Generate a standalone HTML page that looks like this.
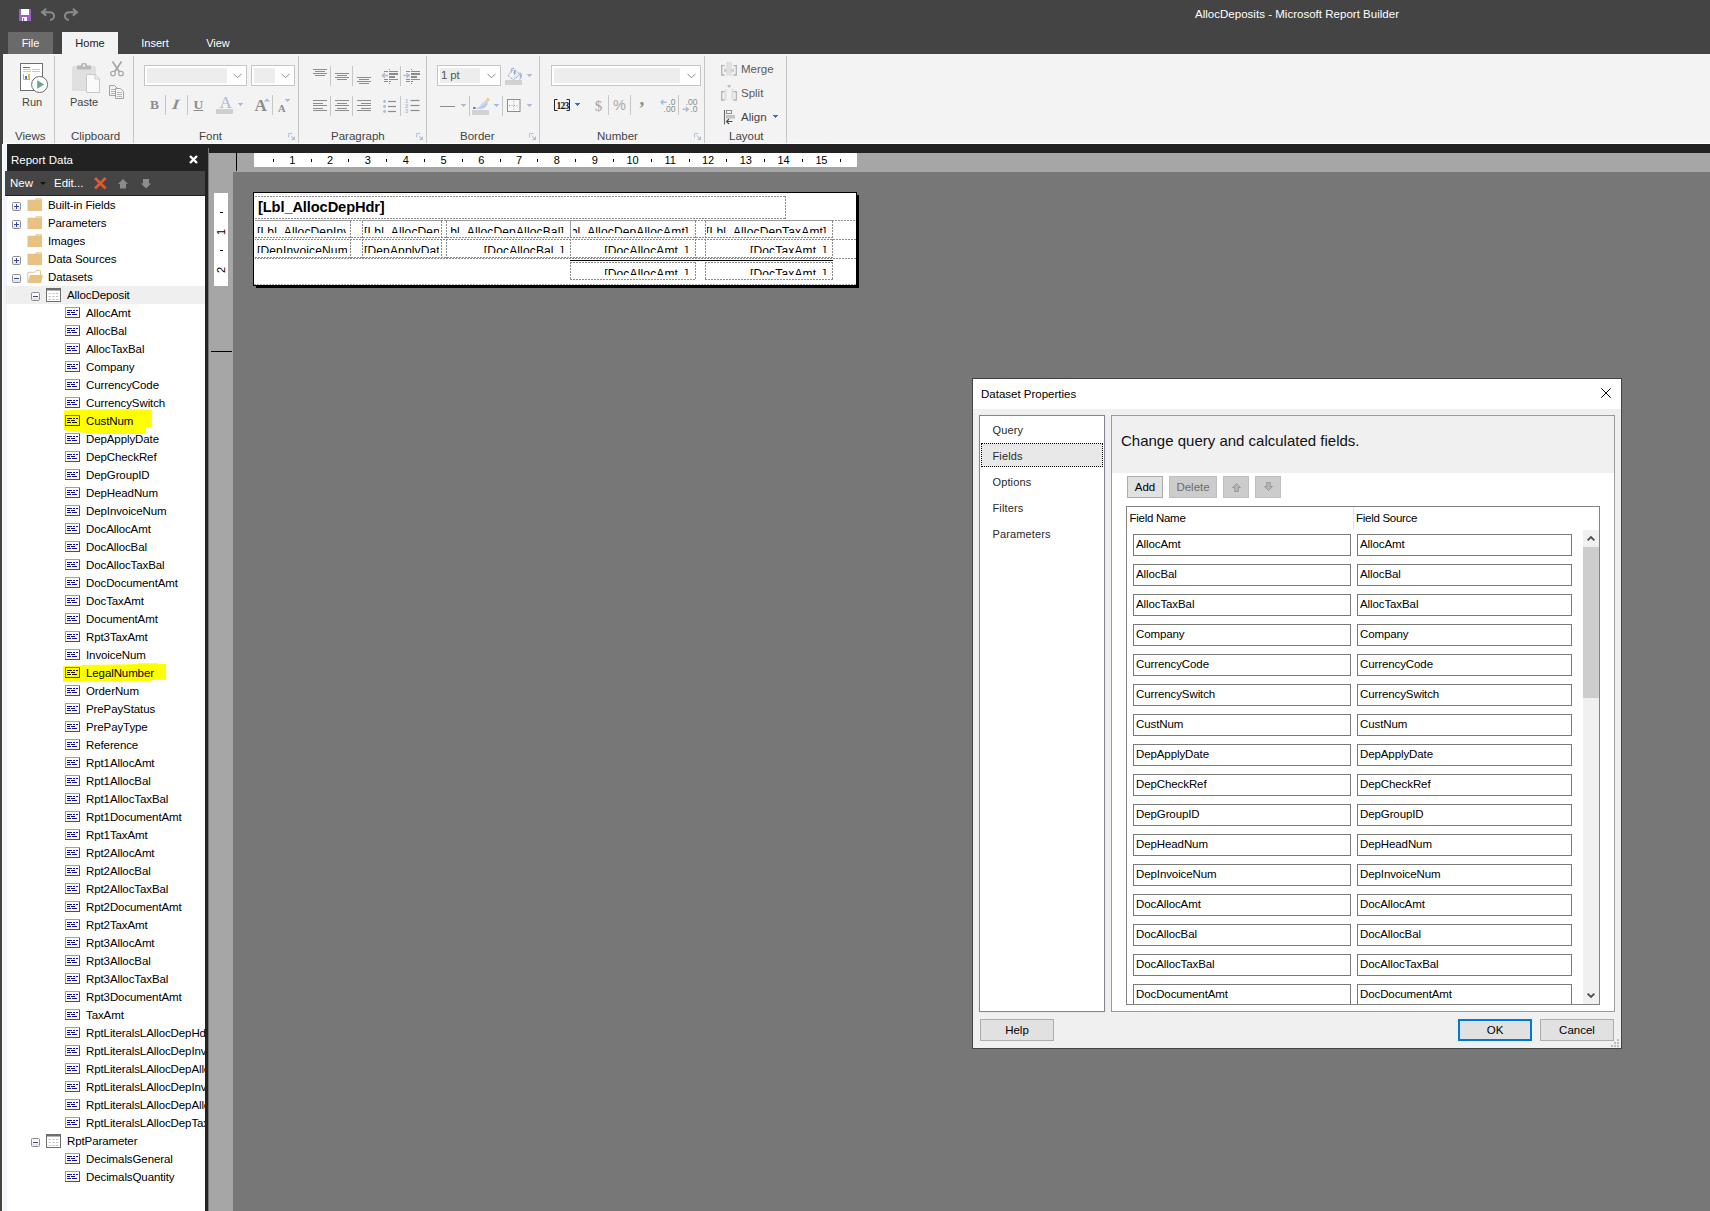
<!DOCTYPE html>
<html lang="en">
<head>
<meta charset="utf-8">
<title>AllocDeposits - Microsoft Report Builder</title>
<style>
*{box-sizing:border-box;margin:0;padding:0}
html,body{width:1710px;height:1211px;overflow:hidden;background:#444444}
body{position:relative;font-family:"Liberation Sans",sans-serif;font-size:11.5px;color:#000;letter-spacing:0}
.abs{position:absolute}
.t{position:absolute;white-space:nowrap;line-height:14px}
svg{position:absolute;overflow:visible}
/* title */
#title{left:1195px;top:7px;color:#fff;font-size:11.5px;letter-spacing:0.02px}
.tab{position:absolute;top:32px;height:22px;color:#fff;line-height:23px;text-align:center;font-size:11px}
#ribbon{left:3px;top:54px;width:1707px;height:90px;background:#f3f3f3}
.rsep{position:absolute;top:2px;width:1px;height:87px;background:#c6c6c6}
.glabel{position:absolute;top:75px;color:#444;font-size:11.5px;line-height:14px;white-space:nowrap}
.rtxt{position:absolute;color:#444;font-size:11.5px;line-height:14px;white-space:nowrap}
.combo{position:absolute;background:#fff;border:1px solid #c6c6c6}
.combo i{position:absolute;left:1px;top:1px;bottom:1px;background:#ededed}
.vs{position:absolute;width:1px;background:#c6c6c6}
/* left panel */
#lp{left:2px;top:144px;width:203px;height:1067px;background:#fff;overflow:hidden}
.row{position:absolute;left:0;height:18px;line-height:18px;white-space:nowrap;font-size:11.5px;letter-spacing:-0.1px}
.hl{position:absolute;background:#ffff00}
/* dialog */
#dlg{left:973px;top:379px;width:648px;height:669px;background:#f0f0f0;border:1px solid #444}
.inp{position:absolute;height:22px;background:#fff;border:1px solid #7a7a7a;font-size:11.5px;line-height:19px;padding-left:2px;white-space:nowrap;letter-spacing:-0.1px}
.btn{position:absolute;height:22px;background:#e1e1e1;border:1px solid #adadad;text-align:center;line-height:20px;font-size:11.5px}
.nav{position:absolute;left:12px;font-size:12px;line-height:14px;letter-spacing:-0.1px}
/* canvas */
.cell{position:absolute;overflow:hidden;font-size:13px;letter-spacing:0;white-space:nowrap;border:1px dashed #9a9a9a}
.cell span{position:absolute;top:5px;line-height:15px}
</style>
</head>
<body>
<!-- title bar -->
<svg class="abs" style="left:19px;top:9px" width="12" height="12" viewBox="0 0 12 12"><rect x="0" y="0" width="12" height="12" fill="#9c62c4"/><rect x="2" y="0" width="8" height="6" fill="#fff"/><rect x="3" y="8" width="5" height="4" fill="#fff"/><rect x="4" y="9" width="1.2" height="3" fill="#9c62c4"/></svg>
<svg style="left:41px;top:8px" width="14" height="13" viewBox="0 0 14 13"><path d="M5.2 0.8 L1 4.2 L5.2 7.6 M1.2 4.2 H8.5 C11.5 4.2 13 6 13 8 C13 10.3 11.3 12 9 12" fill="none" stroke="#8a8a8a" stroke-width="2"/></svg>
<svg style="left:64px;top:8px" width="14" height="13" viewBox="0 0 14 13"><path d="M8.8 0.8 L13 4.2 L8.8 7.6 M12.8 4.2 H5.5 C2.5 4.2 1 6 1 8 C1 10.3 2.7 12 5 12" fill="none" stroke="#8a8a8a" stroke-width="2"/></svg>
<div id="title" class="t">AllocDeposits - Microsoft Report Builder</div>
<div class="tab" style="left:8px;width:45px;background:#6a6a6a">File</div>
<div class="tab" style="left:62px;width:56px;height:23px;background:#f3f3f3;color:#222">Home</div>
<div class="tab" style="left:132px;width:46px">Insert</div>
<div class="tab" style="left:200px;width:36px">View</div>
<div id="ribbon" class="abs">
<div class="rsep" style="left:51px"></div>
<div class="rsep" style="left:130px"></div>
<div class="rsep" style="left:295px"></div>
<div class="rsep" style="left:423px"></div>
<div class="rsep" style="left:536px"></div>
<div class="rsep" style="left:701px"></div>
<div class="rsep" style="left:783px"></div>
<div class="glabel" style="left:12px">Views</div>
<div class="glabel" style="left:68px">Clipboard</div>
<div class="glabel" style="left:196px">Font</div>
<div class="glabel" style="left:328px">Paragraph</div>
<div class="glabel" style="left:457px">Border</div>
<div class="glabel" style="left:594px">Number</div>
<div class="glabel" style="left:726px">Layout</div>
<svg style="left:285px;top:79px" width="7" height="7" viewBox="0 0 7 7"><path d="M0.5 4.5 V0.5 H4.5" fill="none" stroke="#b4c4e0" stroke-width="1"/><path d="M2.5 2.5 L5.5 5.5" fill="none" stroke="#a9bcdc" stroke-width="1"/><path d="M7 3 V7 H3 Z" fill="#a9bcdc"/></svg>
<svg style="left:413px;top:79px" width="7" height="7" viewBox="0 0 7 7"><path d="M0.5 4.5 V0.5 H4.5" fill="none" stroke="#b4c4e0" stroke-width="1"/><path d="M2.5 2.5 L5.5 5.5" fill="none" stroke="#a9bcdc" stroke-width="1"/><path d="M7 3 V7 H3 Z" fill="#a9bcdc"/></svg>
<svg style="left:526px;top:79px" width="7" height="7" viewBox="0 0 7 7"><path d="M0.5 4.5 V0.5 H4.5" fill="none" stroke="#b4c4e0" stroke-width="1"/><path d="M2.5 2.5 L5.5 5.5" fill="none" stroke="#a9bcdc" stroke-width="1"/><path d="M7 3 V7 H3 Z" fill="#a9bcdc"/></svg>
<svg style="left:691px;top:79px" width="7" height="7" viewBox="0 0 7 7"><path d="M0.5 4.5 V0.5 H4.5" fill="none" stroke="#b4c4e0" stroke-width="1"/><path d="M2.5 2.5 L5.5 5.5" fill="none" stroke="#a9bcdc" stroke-width="1"/><path d="M7 3 V7 H3 Z" fill="#a9bcdc"/></svg>
<svg style="left:17px;top:9px" width="29" height="30" viewBox="0 0 29 30">
<rect x="0.5" y="0.5" width="22" height="27" fill="#fff" stroke="#6e6e6e"/>
<rect x="3" y="4" width="7" height="1" fill="#3b78c4"/>
<rect x="3" y="6" width="8" height="1" fill="#c8c8c8"/><rect x="3" y="8" width="8" height="1" fill="#c8c8c8"/>
<rect x="12" y="6" width="8" height="1" fill="#c8c8c8"/><rect x="12" y="8" width="8" height="1" fill="#c8c8c8"/>
<path d="M3.5 11 V16.5 H10" fill="none" stroke="#b0b0b0"/>
<rect x="5" y="13" width="2" height="3" fill="#3b78c4"/><rect x="8" y="11" width="2" height="5" fill="#eab65c"/>
<path d="M12.6 19.5 Q13 16.3 15.8 14.6" stroke="#eab65c" stroke-width="1.4" fill="none"/><path d="M11.8 22.3 H14 L13.6 25.2 Z" fill="#555"/>
<circle cx="19.6" cy="21.5" r="8" fill="#fff" stroke="#6e6e6e" stroke-width="1"/>
<path d="M17.2 17.2 L24.2 21.5 L17.2 25.8 Z" fill="#6aa68e"/>
</svg>
<div class="rtxt" style="left:19px;top:40.6px;font-size:11px">Run</div>
<svg style="left:69px;top:9px" width="29" height="30" viewBox="0 0 29 30">
<rect x="0" y="3" width="24" height="25" rx="1" fill="#e0e0e0"/>
<rect x="5" y="2.5" width="14" height="4" fill="#b9b9b9"/><rect x="9" y="0" width="6" height="4" rx="1.5" fill="#b9b9b9"/><rect x="11" y="1.5" width="2" height="2" fill="#f3f3f3"/>
<path d="M14.5 11.5 H23 L27.5 16 V29.5 H14.5 Z" fill="#fafafa" stroke="#c9c9c9"/><path d="M23 11.5 V16 H27.5" fill="none" stroke="#c9c9c9"/>
</svg>
<div class="rtxt" style="left:67px;top:40.6px;font-size:11px">Paste</div>
<svg style="left:106px;top:7px" width="16" height="16" viewBox="0 0 16 16"><path d="M3.5 0.5 L10.5 11 M12.5 0.5 L5.5 11" stroke="#a3a3a3" stroke-width="1.6" fill="none"/><circle cx="4" cy="12.5" r="2.3" fill="none" stroke="#a3a3a3" stroke-width="1.1"/><circle cx="12" cy="12.5" r="2.3" fill="none" stroke="#a3a3a3" stroke-width="1.1"/></svg>
<svg style="left:106px;top:31px" width="16" height="15" viewBox="0 0 16 15"><path d="M0.5 0.5 H5.5 L8.5 3.5 V10.5 H0.5 Z" fill="#f3f3f3" stroke="#a3a3a3"/><path d="M2 4.5 H6 M2 6.5 H6 M2 8.5 H6" stroke="#b5b5b5"/><path d="M6.5 3.5 H11.5 L14.5 6.5 V13.5 H6.5 Z" fill="#f3f3f3" stroke="#a3a3a3"/><path d="M8 7.5 H13 M8 9.5 H13 M8 11.5 H13" stroke="#b5b5b5"/></svg>
<div class="combo" style="left:141px;top:11px;width:103px;height:21px"><i style="left:2px;top:2px;bottom:2px;width:80px"></i><svg style="right:4px;top:6.5px" width="9" height="6" viewBox="0 0 9 6"><path d="M0.5 0.8 L4.5 4.8 L8.5 0.8" fill="none" stroke="#8c8c8c" stroke-width="1"/></svg></div>
<div class="combo" style="left:248px;top:11px;width:44px;height:21px"><i style="left:2px;top:2px;bottom:2px;width:21px"></i><svg style="right:4px;top:6.5px" width="9" height="6" viewBox="0 0 9 6"><path d="M0.5 0.8 L4.5 4.8 L8.5 0.8" fill="none" stroke="#8c8c8c" stroke-width="1"/></svg></div>
<div class="combo" style="left:434px;top:11px;width:64px;height:21px"><i style="left:2px;top:2px;bottom:2px;width:40px"></i><span class="t" style="left:3px;top:2px;color:#555;font-size:11.5px;letter-spacing:-0.2px">1 pt</span><svg style="right:4px;top:6.5px" width="9" height="6" viewBox="0 0 9 6"><path d="M0.5 0.8 L4.5 4.8 L8.5 0.8" fill="none" stroke="#8c8c8c" stroke-width="1"/></svg></div>
<div class="combo" style="left:548px;top:11px;width:150px;height:21px"><i style="left:2px;top:2px;bottom:2px;width:126px"></i><svg style="right:4px;top:6.5px" width="9" height="6" viewBox="0 0 9 6"><path d="M0.5 0.8 L4.5 4.8 L8.5 0.8" fill="none" stroke="#8c8c8c" stroke-width="1"/></svg></div>
<div class="vs" style="left:162px;top:41px;height:20px"></div>
<div class="vs" style="left:184px;top:41px;height:20px"></div>
<div class="vs" style="left:269px;top:41px;height:20px"></div>
<div class="vs" style="left:327px;top:12px;height:20px"></div>
<div class="vs" style="left:349px;top:12px;height:20px"></div>
<div class="vs" style="left:397px;top:12px;height:20px"></div>
<div class="vs" style="left:327px;top:42px;height:20px"></div>
<div class="vs" style="left:349px;top:42px;height:20px"></div>
<div class="vs" style="left:397px;top:42px;height:20px"></div>
<div class="vs" style="left:466px;top:42px;height:20px"></div>
<div class="vs" style="left:499px;top:42px;height:20px"></div>
<div class="vs" style="left:605px;top:41px;height:20px"></div>
<div class="vs" style="left:627px;top:41px;height:20px"></div>
<div class="vs" style="left:675px;top:41px;height:20px"></div>
<div class="t" style="left:147px;top:44.3px;font-family:'Liberation Serif',serif;letter-spacing:0;font-weight:bold;font-size:13.5px;color:#8c8c8c">B</div>
<div class="t" style="left:169.5px;top:44.3px;font-family:'Liberation Serif',serif;letter-spacing:0;font-style:italic;font-weight:bold;font-size:14px;transform:skewX(-8deg) scaleX(1.25);color:#8c8c8c">I</div>
<div class="t" style="left:190.5px;top:43.5px;font-family:'Liberation Serif',serif;letter-spacing:0;font-weight:bold;font-size:13.5px;color:#8c8c8c;text-decoration:underline;text-underline-offset:1.2px">U</div>
<div class="t" style="left:216.5px;top:41px;font-family:'Liberation Serif',serif;letter-spacing:0;font-size:17px;color:#a9b7d9;line-height:16px">A</div>
<div class="abs" style="left:213px;top:55px;width:17px;height:5px;background:#cfcfcf"></div>
<svg style="left:235px;top:49px" width="5" height="3" viewBox="0 0 5 3" shape-rendering="crispEdges"><rect x="0" y="0" width="5" height="1" fill="#a9bcdc"/><rect x="1" y="1" width="3" height="1" fill="#a9bcdc"/><rect x="2" y="2" width="1" height="1" fill="#a9bcdc"/></svg>
<div class="t" style="left:251.5px;top:44.3px;font-family:'Liberation Serif',serif;letter-spacing:0;font-size:17px;color:#8c8c8c;line-height:16px;font-weight:bold">A</div>
<svg style="left:261px;top:44px" width="6" height="4" viewBox="0 0 6 4"><path d="M0 3.6 H6 L3 0.3 Z" fill="#a9bcdc"/></svg>
<div class="t" style="left:275px;top:47.6px;font-family:'Liberation Serif',serif;letter-spacing:0;font-size:10.5px;color:#8c8c8c;line-height:13px;font-weight:bold">A</div>
<svg style="left:282px;top:45px" width="5" height="3" viewBox="0 0 5 3" shape-rendering="crispEdges"><rect x="0" y="0" width="5" height="1" fill="#a9bcdc"/><rect x="1" y="1" width="3" height="1" fill="#a9bcdc"/><rect x="2" y="2" width="1" height="1" fill="#a9bcdc"/></svg>
<svg style="left:310px;top:-54px" width="14" height="1" viewBox="0 0 14 1"><rect x="0.0" y="69" width="14" height="1" fill="#8c8c8c"/><rect x="2.0" y="71" width="10" height="1" fill="#8c8c8c"/><rect x="0.0" y="73" width="14" height="1" fill="#8c8c8c"/><rect x="2.0" y="75" width="10" height="1" fill="#8c8c8c"/></svg>
<svg style="left:332px;top:-54px" width="14" height="1" viewBox="0 0 14 1"><rect x="0.0" y="73" width="14" height="1" fill="#8c8c8c"/><rect x="2.0" y="75" width="10" height="1" fill="#8c8c8c"/><rect x="0.0" y="77" width="14" height="1" fill="#8c8c8c"/><rect x="2.0" y="79" width="10" height="1" fill="#8c8c8c"/></svg>
<svg style="left:354px;top:-54px" width="14" height="1" viewBox="0 0 14 1"><rect x="0.0" y="77" width="14" height="1" fill="#8c8c8c"/><rect x="2.0" y="79" width="10" height="1" fill="#8c8c8c"/><rect x="0.0" y="81" width="14" height="1" fill="#8c8c8c"/><rect x="2.0" y="83" width="10" height="1" fill="#8c8c8c"/></svg>
<svg style="left:310px;top:-54px" width="14" height="1" viewBox="0 0 14 1"><rect x="0" y="100" width="14" height="1" fill="#8c8c8c"/><rect x="0" y="103" width="10" height="1" fill="#8c8c8c"/><rect x="0" y="105" width="14" height="1" fill="#8c8c8c"/><rect x="0" y="108" width="10" height="1" fill="#8c8c8c"/><rect x="0" y="110" width="14" height="1" fill="#8c8c8c"/></svg>
<svg style="left:332px;top:-54px" width="14" height="1" viewBox="0 0 14 1"><rect x="0.0" y="100" width="14" height="1" fill="#8c8c8c"/><rect x="2.0" y="103" width="10" height="1" fill="#8c8c8c"/><rect x="0.0" y="105" width="14" height="1" fill="#8c8c8c"/><rect x="2.0" y="108" width="10" height="1" fill="#8c8c8c"/><rect x="0.0" y="110" width="14" height="1" fill="#8c8c8c"/></svg>
<svg style="left:354px;top:-54px" width="14" height="1" viewBox="0 0 14 1"><rect x="0" y="100" width="14" height="1" fill="#8c8c8c"/><rect x="4" y="103" width="10" height="1" fill="#8c8c8c"/><rect x="0" y="105" width="14" height="1" fill="#8c8c8c"/><rect x="4" y="108" width="10" height="1" fill="#8c8c8c"/><rect x="0" y="110" width="14" height="1" fill="#8c8c8c"/></svg>
<svg style="left:378px;top:15px" width="18" height="15" viewBox="0 0 18 15" shape-rendering="crispEdges"><rect x="8" y="0" width="1" height="1" fill="#8c8c8c"/><rect x="8" y="14" width="1" height="1" fill="#8c8c8c"/><rect x="3" y="2" width="4" height="1" fill="#8c8c8c"/><rect x="8" y="2" width="9" height="1" fill="#8c8c8c"/><rect x="8" y="4" width="9" height="2" fill="#8c8c8c"/><rect x="8" y="7" width="6" height="2" fill="#8c8c8c"/><rect x="3" y="10" width="4" height="1" fill="#8c8c8c"/><rect x="8" y="10" width="9" height="1" fill="#8c8c8c"/><rect x="3" y="12" width="4" height="1" fill="#8c8c8c"/><rect x="8" y="12" width="2" height="1" fill="#8c8c8c"/></svg>
<svg style="left:378px;top:18px" width="7" height="7" viewBox="0 0 7 7"><path d="M1.3 3.5 H6.8 M3.9 1.2 L1.3 3.5 L3.9 5.8" stroke="#a9bcdc" stroke-width="1.5" fill="none"/></svg>
<svg style="left:400px;top:15px" width="18" height="15" viewBox="0 0 18 15" shape-rendering="crispEdges"><rect x="8" y="0" width="1" height="1" fill="#8c8c8c"/><rect x="8" y="14" width="1" height="1" fill="#8c8c8c"/><rect x="3" y="2" width="4" height="1" fill="#8c8c8c"/><rect x="8" y="2" width="9" height="1" fill="#8c8c8c"/><rect x="8" y="4" width="9" height="2" fill="#8c8c8c"/><rect x="8" y="7" width="6" height="2" fill="#8c8c8c"/><rect x="3" y="10" width="4" height="1" fill="#8c8c8c"/><rect x="8" y="10" width="9" height="1" fill="#8c8c8c"/><rect x="3" y="12" width="4" height="1" fill="#8c8c8c"/><rect x="8" y="12" width="2" height="1" fill="#8c8c8c"/></svg>
<svg style="left:400px;top:18px" width="7" height="7" viewBox="0 0 7 7"><path d="M0.5 3.5 H6 M3.6 1.2 L6.2 3.5 L3.6 5.8" stroke="#a9bcdc" stroke-width="1.5" fill="none"/></svg>
<svg style="left:380px;top:45px" width="14" height="14" viewBox="0 0 14 14"><circle cx="1.6" cy="2.5" r="1.4" fill="#a9bcdc"/><rect x="5" y="1.9" width="8" height="1.2" fill="#8c8c8c"/><circle cx="1.6" cy="7.5" r="1.4" fill="#a9bcdc"/><rect x="5" y="6.9" width="8" height="1.2" fill="#8c8c8c"/><circle cx="1.6" cy="12.5" r="1.4" fill="#a9bcdc"/><rect x="5" y="11.9" width="8" height="1.2" fill="#8c8c8c"/></svg>
<svg style="left:402px;top:44px" width="15" height="15" viewBox="0 0 15 15"><text x="0" y="4.7" font-family="Liberation Sans" font-size="6" font-weight="bold" fill="#a9bcdc">1</text><rect x="5.5" y="1.9" width="9" height="1.2" fill="#8c8c8c"/><text x="0" y="9.7" font-family="Liberation Sans" font-size="6" font-weight="bold" fill="#a9bcdc">2</text><rect x="5.5" y="6.9" width="9" height="1.2" fill="#8c8c8c"/><text x="0" y="14.7" font-family="Liberation Sans" font-size="6" font-weight="bold" fill="#a9bcdc">3</text><rect x="5.5" y="11.9" width="9" height="1.2" fill="#8c8c8c"/></svg>
<svg style="left:502px;top:13px" width="18" height="19" viewBox="0 0 18 19">
<defs><linearGradient id="bk" x1="0" y1="0" x2="1" y2="1"><stop offset="0.3" stop-color="#fbfcfe"/><stop offset="1" stop-color="#cfd9f0"/></linearGradient></defs>
<rect x="0" y="13" width="17" height="5" fill="#d2d2d2"/>
<path d="M3 8.5 L9 1.8 L14.9 7.6 L8.3 12.9 Z" fill="url(#bk)" stroke="#8797ba" stroke-width="1" stroke-dasharray="1.2 0.9"/>
<path d="M6.4 5.6 C5.4 3 6.8 0.7 8.9 1.3" fill="none" stroke="#9fadcf" stroke-width="1.1"/>
<ellipse cx="9.6" cy="5.4" rx="1" ry="2.4" fill="#9aa3b8"/>
<path d="M14.2 5.3 C16.6 5.4 17.6 8 16.8 10.2 C16.3 11.6 15.2 12 14.7 13.2 C14 11 15.4 9.6 14.9 7.7 Z" fill="#a9b8e6"/>
</svg>
<svg style="left:524px;top:20px" width="5" height="3" viewBox="0 0 5 3" shape-rendering="crispEdges"><rect x="0" y="0" width="5" height="1" fill="#a9bcdc"/><rect x="1" y="1" width="3" height="1" fill="#a9bcdc"/><rect x="2" y="2" width="1" height="1" fill="#a9bcdc"/></svg>
<div class="abs" style="left:437px;top:52px;width:15px;height:1px;background:#8c8c8c"></div>
<svg style="left:458px;top:50px" width="5" height="3" viewBox="0 0 5 3" shape-rendering="crispEdges"><rect x="0" y="0" width="5" height="1" fill="#a9bcdc"/><rect x="1" y="1" width="3" height="1" fill="#a9bcdc"/><rect x="2" y="2" width="1" height="1" fill="#a9bcdc"/></svg>
<svg style="left:469px;top:43px" width="18" height="19" viewBox="0 0 18 19">
<defs><linearGradient id="br" x1="0" y1="0" x2="1" y2="1"><stop offset="0.2" stop-color="#e4ebfa"/><stop offset="1" stop-color="#95abe2"/></linearGradient></defs>
<rect x="0" y="13" width="17" height="5" fill="#d2d2d2"/>
<path d="M15.9 2.4 L13.6 5.2" stroke="#e9d189" stroke-width="3.3" stroke-linecap="round"/>
<path d="M14.9 2 L13 4.2" stroke="#f6ecc6" stroke-width="1" stroke-linecap="round"/>
<path d="M12.4 4.6 C10.6 4.4 9.6 6.4 8.6 8 C7.5 9.8 6 10.8 4.3 11.2 L4.3 11.9 C8 12.3 11.4 11.7 13.7 9.7 C15.3 8.3 16.2 6.6 15.3 5.5 Z" fill="url(#br)"/>
<rect x="1" y="10" width="2.6" height="2" fill="#5f7fd6"/>
</svg>
<svg style="left:491px;top:50px" width="5" height="3" viewBox="0 0 5 3" shape-rendering="crispEdges"><rect x="0" y="0" width="5" height="1" fill="#a9bcdc"/><rect x="1" y="1" width="3" height="1" fill="#a9bcdc"/><rect x="2" y="2" width="1" height="1" fill="#a9bcdc"/></svg>
<svg style="left:504px;top:45px" width="14" height="13" viewBox="0 0 14 13"><rect x="0.5" y="0.5" width="12.5" height="12" fill="#f8f8f8" stroke="#8c8c8c"/><path d="M6.7 2 V11.5 M2 6.5 H12" stroke="#a0a0a0" stroke-dasharray="1 1.5" fill="none"/></svg>
<svg style="left:524px;top:50px" width="5" height="3" viewBox="0 0 5 3" shape-rendering="crispEdges"><rect x="0" y="0" width="5" height="1" fill="#a9bcdc"/><rect x="1" y="1" width="3" height="1" fill="#a9bcdc"/><rect x="2" y="2" width="1" height="1" fill="#a9bcdc"/></svg>
<svg style="left:551px;top:45px" width="16" height="12" viewBox="0 0 16 12"><path d="M3.5 0.5 H0.5 V11.5 H3.5 M12.5 0.5 H15.5 V11.5 H12.5" fill="none" stroke="#222" stroke-width="1"/><text x="8.4" y="9.6" text-anchor="middle" font-family="Liberation Serif" font-weight="bold" font-size="9.5" fill="#111" letter-spacing="-0.75">123</text></svg>
<svg style="left:572px;top:49px" width="5" height="3" viewBox="0 0 5 3" shape-rendering="crispEdges"><rect x="0" y="0" width="5" height="1" fill="#3f6fc1"/><rect x="1" y="1" width="3" height="1" fill="#3f6fc1"/><rect x="2" y="2" width="1" height="1" fill="#3f6fc1"/></svg>
<div class="t" style="left:591.8px;top:43.5px;font-family:'Liberation Serif',serif;letter-spacing:0;font-size:15px;color:#a4a4a4;line-height:16px">$</div>
<div class="t" style="left:610px;top:43px;font-size:14.5px;color:#a8a8a8;line-height:16px;letter-spacing:0">%</div>
<div class="t" style="left:636.5px;top:37px;font-family:'Liberation Serif',serif;letter-spacing:0;font-size:19px;font-weight:bold;color:#8c8c8c;line-height:16px">,</div>
<svg style="left:656px;top:44px" width="17" height="15" viewBox="0 0 17 15"><path d="M2 4.3 H7.6 M4.4 2 L2 4.3 L4.4 6.6" stroke="#a9bcdc" stroke-width="1.4" fill="none"/><text x="16.4" y="6.6" text-anchor="end" font-family="Liberation Sans" font-size="8.5" fill="#8c8c8c">.0</text><text x="16.4" y="13.6" text-anchor="end" font-family="Liberation Sans" font-size="8.5" fill="#8c8c8c">.00</text></svg>
<svg style="left:678px;top:44px" width="17" height="15" viewBox="0 0 17 15"><text x="16.4" y="6.6" text-anchor="end" font-family="Liberation Sans" font-size="8.5" fill="#8c8c8c">.00</text><path d="M1.5 11.3 H7.3 M4.9 9 L7.4 11.3 L4.9 13.6" stroke="#a9bcdc" stroke-width="1.4" fill="none"/><text x="16.4" y="13.6" text-anchor="end" font-family="Liberation Sans" font-size="8.5" fill="#8c8c8c">.0</text></svg>
<svg style="left:718px;top:8px" width="16" height="15" viewBox="0 0 16 15"><rect x="5" y="0" width="6" height="13.6" fill="#e0e0e0"/><path d="M3.6 3.7 H0.7 V13 H3.6 M12.4 3.7 H15.3 V13 H12.4" fill="none" stroke="#b2b2b2" stroke-width="1.3"/><path d="M3.2 6.2 L6.2 8.4 L3.2 10.6 Z M12.8 6.2 L9.8 8.4 L12.8 10.6 Z" fill="#c2c2c2"/></svg>
<div class="rtxt" style="left:738px;top:8px;color:#5a5a5a">Merge</div>
<svg style="left:718px;top:31px" width="16" height="16" viewBox="0 0 16 16"><path d="M6 0.3 H10.2 L8.1 2.8 Z" fill="#b2b2b2"/><rect x="3.4" y="4" width="2.4" height="11" fill="#e2e2e2"/><rect x="10.4" y="4" width="2.4" height="11" fill="#e2e2e2"/><path d="M3.6 6.7 H0.7 V15 H3.6 M12.4 6.7 H15.3 V15 H12.4" fill="none" stroke="#b2b2b2" stroke-width="1.3"/></svg>
<div class="rtxt" style="left:738px;top:32px;color:#5a5a5a">Split</div>
<svg style="left:720px;top:56px" width="13" height="15" viewBox="0 0 13 15"><path d="M1.5 0 V14.5" stroke="#6a6a6a" stroke-width="1.1"/><rect x="3.5" y="0.5" width="5" height="3" fill="#f8f8f8" stroke="#8c8c8c"/><rect x="3" y="5" width="9" height="3.6" fill="#c4c4c4"/><path d="M3.5 11.5 H9.5 M6 9 L3.5 11.5 L6 14" fill="none" stroke="#4a4a4a" stroke-width="1.1"/></svg>
<div class="rtxt" style="left:738px;top:56px">Align</div>
<svg style="left:770px;top:61px" width="5" height="3" viewBox="0 0 5 3" shape-rendering="crispEdges"><rect x="0" y="0" width="5" height="1" fill="#3f6fc1"/><rect x="1" y="1" width="3" height="1" fill="#3f6fc1"/><rect x="2" y="2" width="1" height="1" fill="#3f6fc1"/></svg>
<div class="abs" style="left:0;top:89px;width:1707px;height:1px;background:#fff"></div>
</div>
<div class="abs" style="left:205px;top:144px;width:1505px;height:9px;background:#222"></div>
<div class="abs" style="left:205px;top:144px;width:4px;height:1067px;background:#222"></div>
<div class="abs" style="left:208px;top:148px;width:1px;height:1063px;background:#777"></div>
<div class="abs" style="left:209px;top:153px;width:1501px;height:1058px;background:#a6a6a6"></div>
<div class="abs" style="left:233px;top:172px;width:1477px;height:1039px;background:#777777"></div>
<div class="abs" style="left:236px;top:153px;width:1px;height:18px;background:#000"></div>
<div class="abs" style="left:211px;top:351px;width:21px;height:1px;background:#000"></div>
<div class="abs" style="left:254px;top:153px;width:603px;height:14px;background:#fff"></div>
<div class="t" style="left:282.2px;top:153px;width:20px;text-align:center;font-size:11px;letter-spacing:-0.2px;line-height:14px">1</div>
<div class="t" style="left:320.0px;top:153px;width:20px;text-align:center;font-size:11px;letter-spacing:-0.2px;line-height:14px">2</div>
<div class="t" style="left:357.8px;top:153px;width:20px;text-align:center;font-size:11px;letter-spacing:-0.2px;line-height:14px">3</div>
<div class="t" style="left:395.6px;top:153px;width:20px;text-align:center;font-size:11px;letter-spacing:-0.2px;line-height:14px">4</div>
<div class="t" style="left:433.4px;top:153px;width:20px;text-align:center;font-size:11px;letter-spacing:-0.2px;line-height:14px">5</div>
<div class="t" style="left:471.2px;top:153px;width:20px;text-align:center;font-size:11px;letter-spacing:-0.2px;line-height:14px">6</div>
<div class="t" style="left:509.0px;top:153px;width:20px;text-align:center;font-size:11px;letter-spacing:-0.2px;line-height:14px">7</div>
<div class="t" style="left:546.8px;top:153px;width:20px;text-align:center;font-size:11px;letter-spacing:-0.2px;line-height:14px">8</div>
<div class="t" style="left:584.6px;top:153px;width:20px;text-align:center;font-size:11px;letter-spacing:-0.2px;line-height:14px">9</div>
<div class="t" style="left:622.4px;top:153px;width:20px;text-align:center;font-size:11px;letter-spacing:-0.2px;line-height:14px">10</div>
<div class="t" style="left:660.1px;top:153px;width:20px;text-align:center;font-size:11px;letter-spacing:-0.2px;line-height:14px">11</div>
<div class="t" style="left:697.9px;top:153px;width:20px;text-align:center;font-size:11px;letter-spacing:-0.2px;line-height:14px">12</div>
<div class="t" style="left:735.7px;top:153px;width:20px;text-align:center;font-size:11px;letter-spacing:-0.2px;line-height:14px">13</div>
<div class="t" style="left:773.5px;top:153px;width:20px;text-align:center;font-size:11px;letter-spacing:-0.2px;line-height:14px">14</div>
<div class="t" style="left:811.3px;top:153px;width:20px;text-align:center;font-size:11px;letter-spacing:-0.2px;line-height:14px">15</div>
<div class="abs" style="left:273px;top:159px;width:1px;height:3px;background:#000"></div>
<div class="abs" style="left:311px;top:159px;width:1px;height:3px;background:#000"></div>
<div class="abs" style="left:348px;top:159px;width:1px;height:3px;background:#000"></div>
<div class="abs" style="left:386px;top:159px;width:1px;height:3px;background:#000"></div>
<div class="abs" style="left:424px;top:159px;width:1px;height:3px;background:#000"></div>
<div class="abs" style="left:462px;top:159px;width:1px;height:3px;background:#000"></div>
<div class="abs" style="left:500px;top:159px;width:1px;height:3px;background:#000"></div>
<div class="abs" style="left:537px;top:159px;width:1px;height:3px;background:#000"></div>
<div class="abs" style="left:575px;top:159px;width:1px;height:3px;background:#000"></div>
<div class="abs" style="left:613px;top:159px;width:1px;height:3px;background:#000"></div>
<div class="abs" style="left:651px;top:159px;width:1px;height:3px;background:#000"></div>
<div class="abs" style="left:689px;top:159px;width:1px;height:3px;background:#000"></div>
<div class="abs" style="left:726px;top:159px;width:1px;height:3px;background:#000"></div>
<div class="abs" style="left:764px;top:159px;width:1px;height:3px;background:#000"></div>
<div class="abs" style="left:802px;top:159px;width:1px;height:3px;background:#000"></div>
<div class="abs" style="left:840px;top:159px;width:1px;height:3px;background:#000"></div>
<div class="abs" style="left:214px;top:193px;width:14px;height:93px;background:#fff"></div>
<div class="abs" style="left:220px;top:212px;width:3px;height:1px;background:#000"></div>
<div class="t" style="left:211px;top:224.8px;width:20px;height:14px;text-align:center;font-size:11px;line-height:14px;transform:rotate(-90deg)">1</div>
<div class="abs" style="left:220px;top:250px;width:3px;height:1px;background:#000"></div>
<div class="t" style="left:211px;top:262.8px;width:20px;height:14px;text-align:center;font-size:11px;line-height:14px;transform:rotate(-90deg)">2</div>
<div class="abs" style="left:256px;top:195px;width:603px;height:93px;background:#000"></div>
<div class="abs" style="left:253px;top:192px;width:604px;height:94px;background:#fff;border:1px solid #000"></div>
<svg style="left:0;top:0" width="1710" height="300" viewBox="0 0 1710 300" shape-rendering="crispEdges" fill="none" stroke-width="1"><path d="M255 196.5 H786" stroke="#8c8c8c" stroke-dasharray="2 1" stroke-dashoffset="0"/><path d="M255 218.5 H786" stroke="#8c8c8c" stroke-dasharray="2 1" stroke-dashoffset="0"/><path d="M785.5 196 V219" stroke="#8c8c8c" stroke-dasharray="2 1" stroke-dashoffset="0"/><path d="M255 220.5 H351" stroke="#9c9c9c"/><path d="M362 220.5 H442" stroke="#9c9c9c"/><path d="M446 220.5 H571" stroke="#9c9c9c"/><path d="M570 220.5 H696" stroke="#9c9c9c"/><path d="M705 220.5 H833" stroke="#9c9c9c"/><path d="M350 220.5 H362" stroke="#8c8c8c" stroke-dasharray="2 1" stroke-dashoffset="0"/><path d="M441 220.5 H446" stroke="#8c8c8c" stroke-dasharray="2 1" stroke-dashoffset="0"/><path d="M695 220.5 H705" stroke="#8c8c8c" stroke-dasharray="2 1" stroke-dashoffset="0"/><path d="M832 220.5 H856" stroke="#8c8c8c" stroke-dasharray="2 1" stroke-dashoffset="0"/><path d="M255 237.5 H832" stroke="#8c8c8c" stroke-dasharray="2 1" stroke-dashoffset="0"/><path d="M255 239.5 H856" stroke="#8c8c8c" stroke-dasharray="2 1" stroke-dashoffset="1"/><path d="M255 257.5 H832" stroke="#8c8c8c" stroke-dasharray="2 1" stroke-dashoffset="0"/><path d="M255 258.5 H856" stroke="#8c8c8c" stroke-dasharray="2 1" stroke-dashoffset="1"/><path d="M350.5 221 V258" stroke="#8c8c8c" stroke-dasharray="2 1" stroke-dashoffset="0"/><path d="M362.5 221 V258" stroke="#8c8c8c" stroke-dasharray="2 1" stroke-dashoffset="0"/><path d="M441.5 221 V258" stroke="#8c8c8c" stroke-dasharray="2 1" stroke-dashoffset="0"/><path d="M446.5 221 V258" stroke="#8c8c8c" stroke-dasharray="2 1" stroke-dashoffset="0"/><path d="M695.5 221 V258" stroke="#8c8c8c" stroke-dasharray="2 1" stroke-dashoffset="0"/><path d="M705.5 221 V258" stroke="#8c8c8c" stroke-dasharray="2 1" stroke-dashoffset="0"/><path d="M832.5 221 V258" stroke="#8c8c8c" stroke-dasharray="2 1" stroke-dashoffset="0"/><path d="M570.5 221 V237" stroke="#9c9c9c"/><path d="M570.5 239 V258" stroke="#8c8c8c" stroke-dasharray="2 1" stroke-dashoffset="0"/><path d="M570 262.5 H696" stroke="#8c8c8c" stroke-dasharray="2 1" stroke-dashoffset="0"/><path d="M570 279.5 H696" stroke="#8c8c8c" stroke-dasharray="2 1" stroke-dashoffset="0"/><path d="M570.5 262 V280" stroke="#8c8c8c" stroke-dasharray="2 1" stroke-dashoffset="0"/><path d="M695.5 262 V280" stroke="#8c8c8c" stroke-dasharray="2 1" stroke-dashoffset="0"/><path d="M705 262.5 H833" stroke="#8c8c8c" stroke-dasharray="2 1" stroke-dashoffset="0"/><path d="M705 279.5 H833" stroke="#8c8c8c" stroke-dasharray="2 1" stroke-dashoffset="0"/><path d="M705.5 262 V280" stroke="#8c8c8c" stroke-dasharray="2 1" stroke-dashoffset="0"/><path d="M832.5 262 V280" stroke="#8c8c8c" stroke-dasharray="2 1" stroke-dashoffset="0"/><path d="M254 284.5 H856" stroke="#b0b0b0" stroke-dasharray="2 1" stroke-dashoffset="0"/><path d="M570 260.5 H833" stroke="#000"/></svg>
<div class="abs" style="left:258px;top:198px;width:526px;height:20px;overflow:hidden"><span class="t" style="left:0;top:1.23px;font-size:14.67px;line-height:normal;letter-spacing:-0.12px;font-weight:bold;">[Lbl_AllocDepHdr]</span></div>
<div class="abs" style="left:257px;top:223px;width:90px;height:10px;overflow:hidden"><span class="t" style="left:0;top:1.83px;font-size:12px;line-height:normal;letter-spacing:0.15px;">[Lbl_AllocDepInvoiceNum]</span></div>
<div class="abs" style="left:364px;top:223px;width:75px;height:10px;overflow:hidden"><span class="t" style="left:0;top:1.83px;font-size:12px;line-height:normal;letter-spacing:0.15px;">[Lbl_AllocDepInvoiceDate]</span></div>
<div class="abs" style="left:451px;top:223px;width:113px;height:10px;overflow:hidden"><span class="t" style="right:0;top:1.83px;font-size:12px;line-height:normal;letter-spacing:0.15px;">[Lbl_AllocDepAllocBal]</span></div>
<div class="abs" style="left:573px;top:223px;width:115.39999999999998px;height:10px;overflow:hidden"><span class="t" style="right:0;top:1.83px;font-size:12px;line-height:normal;letter-spacing:0.15px;">[Lbl_AllocDepAllocAmt]</span></div>
<div class="abs" style="left:707px;top:223px;width:119.5px;height:10px;overflow:hidden"><span class="t" style="right:0;top:1.83px;font-size:12px;line-height:normal;letter-spacing:0.15px;">[Lbl_AllocDepTaxAmt]</span></div>
<div class="abs" style="left:257px;top:242px;width:90px;height:11px;overflow:hidden"><span class="t" style="left:0;top:1.83px;font-size:12px;line-height:normal;letter-spacing:0.15px;">[DepInvoiceNum]</span></div>
<div class="abs" style="left:364px;top:242px;width:75px;height:11px;overflow:hidden"><span class="t" style="left:0;top:1.83px;font-size:12px;line-height:normal;letter-spacing:0.15px;">[DepApplyDate]</span></div>
<div class="abs" style="left:451px;top:242px;width:113px;height:11px;overflow:hidden"><span class="t" style="right:0;top:1.83px;font-size:12px;line-height:normal;letter-spacing:0.15px;">[DocAllocBal_]</span></div>
<div class="abs" style="left:573px;top:242px;width:115.39999999999998px;height:11px;overflow:hidden"><span class="t" style="right:0;top:1.83px;font-size:12px;line-height:normal;letter-spacing:0.15px;">[DocAllocAmt_]</span></div>
<div class="abs" style="left:707px;top:242px;width:119.5px;height:11px;overflow:hidden"><span class="t" style="right:0;top:1.83px;font-size:12px;line-height:normal;letter-spacing:0.15px;">[DocTaxAmt_]</span></div>
<div class="abs" style="left:573px;top:265px;width:115.39999999999998px;height:10px;overflow:hidden"><span class="t" style="right:0;top:1.83px;font-size:12px;line-height:normal;letter-spacing:0.15px;">[DocAllocAmt_]</span></div>
<div class="abs" style="left:707px;top:265px;width:119.5px;height:10px;overflow:hidden"><span class="t" style="right:0;top:1.83px;font-size:12px;line-height:normal;letter-spacing:0.15px;">[DocTaxAmt_]</span></div>
<div id="lp" class="abs">
<div class="abs" style="left:1px;top:0;width:4px;height:1067px;background:#f2f5fc"></div>
<div class="abs" style="left:5px;top:0;width:198px;height:27px;background:#222"></div>
<div class="t" style="left:9px;top:9px;color:#fff;letter-spacing:0">Report Data</div>
<svg style="left:187px;top:11px" width="9" height="9" viewBox="0 0 9 9"><path d="M1 1 L8 8 M8 1 L1 8" stroke="#fff" stroke-width="2.4" fill="none"/></svg>
<div class="abs" style="left:3px;top:27px;width:200px;height:25px;background:#222"></div>
<div class="abs" style="left:3px;top:27px;width:200px;height:24px;background:#454545"></div>
<div class="t" style="left:8px;top:32px;color:#fff;letter-spacing:0">New</div>
<svg style="left:38px;top:38px" width="6" height="3" viewBox="0 0 6 3"><path d="M0 0 H6 L3 3 Z" fill="#111"/></svg>
<div class="t" style="left:52px;top:32px;color:#fff;letter-spacing:0">Edit...</div>
<svg style="left:91.6px;top:32.8px" width="12.6" height="12.6" viewBox="0 0 12 12"><path d="M1 1 L11 11 M11 1 L1 11" stroke="#de5a34" stroke-width="2.7" fill="none"/></svg>
<svg style="left:116px;top:35px" width="10" height="10" viewBox="0 0 10 10"><path d="M5 0 L10 5 H8 V9.5 H2 V5 H0 Z" fill="#8d8d8d"/></svg>
<svg style="left:139px;top:35px" width="10" height="10" viewBox="0 0 10 10"><path d="M5 9.5 L10 4.5 H8 V0 H2 V4.5 H0 Z" fill="#8d8d8d"/></svg>
<svg style="left:10px;top:58px" width="9" height="9" viewBox="0 0 9 9"><rect x="0.5" y="0.5" width="8" height="8" rx="1" fill="#fafafa" stroke="#8e8e8e"/><rect x="1" y="5.5" width="7" height="2.5" fill="#e4e4e4"/><path d="M2 4.5 H7" stroke="#3447a0" stroke-width="1"/><path d="M4.5 2 V7" stroke="#3447a0" stroke-width="1"/></svg>
<svg style="left:25px;top:54px" width="15" height="13" viewBox="0 0 15 13"><path d="M0.5 2.5 Q0.5 1.8 1.2 1.8 H8 L9.5 0.3 H14.3 Q15 0.3 15 1 V13 H0.5 Z" fill="#e8c283"/><path d="M10 1.3 H14" stroke="#f7e7c6" stroke-width="0.8"/></svg>
<div class="row" style="left:46px;top:52px">Built-in Fields</div>
<svg style="left:10px;top:76px" width="9" height="9" viewBox="0 0 9 9"><rect x="0.5" y="0.5" width="8" height="8" rx="1" fill="#fafafa" stroke="#8e8e8e"/><rect x="1" y="5.5" width="7" height="2.5" fill="#e4e4e4"/><path d="M2 4.5 H7" stroke="#3447a0" stroke-width="1"/><path d="M4.5 2 V7" stroke="#3447a0" stroke-width="1"/></svg>
<svg style="left:25px;top:72px" width="15" height="13" viewBox="0 0 15 13"><path d="M0.5 2.5 Q0.5 1.8 1.2 1.8 H8 L9.5 0.3 H14.3 Q15 0.3 15 1 V13 H0.5 Z" fill="#e8c283"/><path d="M10 1.3 H14" stroke="#f7e7c6" stroke-width="0.8"/></svg>
<div class="row" style="left:46px;top:70px">Parameters</div>
<svg style="left:25px;top:90px" width="15" height="13" viewBox="0 0 15 13"><path d="M0.5 2.5 Q0.5 1.8 1.2 1.8 H8 L9.5 0.3 H14.3 Q15 0.3 15 1 V13 H0.5 Z" fill="#e8c283"/><path d="M10 1.3 H14" stroke="#f7e7c6" stroke-width="0.8"/></svg>
<div class="row" style="left:46px;top:88px">Images</div>
<svg style="left:10px;top:112px" width="9" height="9" viewBox="0 0 9 9"><rect x="0.5" y="0.5" width="8" height="8" rx="1" fill="#fafafa" stroke="#8e8e8e"/><rect x="1" y="5.5" width="7" height="2.5" fill="#e4e4e4"/><path d="M2 4.5 H7" stroke="#3447a0" stroke-width="1"/><path d="M4.5 2 V7" stroke="#3447a0" stroke-width="1"/></svg>
<svg style="left:25px;top:108px" width="15" height="13" viewBox="0 0 15 13"><path d="M0.5 2.5 Q0.5 1.8 1.2 1.8 H8 L9.5 0.3 H14.3 Q15 0.3 15 1 V13 H0.5 Z" fill="#e8c283"/><path d="M10 1.3 H14" stroke="#f7e7c6" stroke-width="0.8"/></svg>
<div class="row" style="left:46px;top:106px">Data Sources</div>
<svg style="left:10px;top:130px" width="9" height="9" viewBox="0 0 9 9"><rect x="0.5" y="0.5" width="8" height="8" rx="1" fill="#fafafa" stroke="#8e8e8e"/><rect x="1" y="5.5" width="7" height="2.5" fill="#e4e4e4"/><path d="M2 4.5 H7" stroke="#3447a0" stroke-width="1"/></svg>
<svg style="left:25px;top:126px" width="16" height="13" viewBox="0 0 16 13"><path d="M0.8 12 V3 Q0.8 2.3 1.5 2.3 H7.5 L9.3 0.5 H12.8 Q13.5 0.5 13.5 1.2 V5" fill="#fff" stroke="#e8c283" stroke-width="1"/><path d="M3 5 H16 L14 13 H0.5 Z" fill="#e8c283"/></svg>
<div class="row" style="left:46px;top:124px">Datasets</div>
<div class="abs" style="left:3.4px;top:142px;width:199.6px;height:18px;background:#efefef"></div>
<svg style="left:29px;top:148px" width="9" height="9" viewBox="0 0 9 9"><rect x="0.5" y="0.5" width="8" height="8" rx="1" fill="#fafafa" stroke="#8e8e8e"/><rect x="1" y="5.5" width="7" height="2.5" fill="#e4e4e4"/><path d="M2 4.5 H7" stroke="#3447a0" stroke-width="1"/></svg>
<svg style="left:44px;top:144px" width="15" height="14" viewBox="0 0 15 14"><rect x="0.5" y="0.5" width="14" height="13" fill="#fff" stroke="#6e6e6e"/><rect x="0" y="0" width="15" height="2.5" fill="#6e6e6e"/><path d="M2.5 5.5 H12.5 M2.5 8.5 H12.5 M2.5 11.5 H12.5" stroke="#c4c4c4" stroke-dasharray="2.4 1.3"/></svg>
<div class="row" style="left:65px;top:142px">AllocDeposit</div>
<svg style="left:63px;top:163px" width="15" height="11" viewBox="0 0 15 11" shape-rendering="crispEdges"><rect x="1" y="1" width="13" height="4" fill="#fffffb"/><rect x="1" y="5" width="13" height="5" fill="#fffde6"/><rect x="0" y="0" width="15" height="1" fill="#b89c62"/><rect x="0" y="0" width="1" height="11" fill="#b89c62"/><rect x="0" y="10" width="15" height="1" fill="#5f4a34"/><rect x="14" y="1" width="1" height="10" fill="#5f4a34"/><rect x="2" y="3" width="5" height="1" fill="#0a0a96"/><rect x="8" y="3" width="2" height="1" fill="#0a0a96"/><rect x="11" y="3" width="2" height="1" fill="#0a0a96"/><rect x="2" y="5" width="3" height="1" fill="#0a0a96"/><rect x="6" y="5" width="4" height="1" fill="#0a0a96"/><rect x="2" y="7" width="4" height="1" fill="#0a0a96"/><rect x="7" y="7" width="5" height="1" fill="#0a0a96"/></svg>
<div class="row" style="left:84px;top:160px">AllocAmt</div>
<svg style="left:63px;top:181px" width="15" height="11" viewBox="0 0 15 11" shape-rendering="crispEdges"><rect x="1" y="1" width="13" height="4" fill="#fffffb"/><rect x="1" y="5" width="13" height="5" fill="#fffde6"/><rect x="0" y="0" width="15" height="1" fill="#b89c62"/><rect x="0" y="0" width="1" height="11" fill="#b89c62"/><rect x="0" y="10" width="15" height="1" fill="#5f4a34"/><rect x="14" y="1" width="1" height="10" fill="#5f4a34"/><rect x="2" y="3" width="5" height="1" fill="#0a0a96"/><rect x="8" y="3" width="2" height="1" fill="#0a0a96"/><rect x="11" y="3" width="2" height="1" fill="#0a0a96"/><rect x="2" y="5" width="3" height="1" fill="#0a0a96"/><rect x="6" y="5" width="4" height="1" fill="#0a0a96"/><rect x="2" y="7" width="4" height="1" fill="#0a0a96"/><rect x="7" y="7" width="5" height="1" fill="#0a0a96"/></svg>
<div class="row" style="left:84px;top:178px">AllocBal</div>
<svg style="left:63px;top:199px" width="15" height="11" viewBox="0 0 15 11" shape-rendering="crispEdges"><rect x="1" y="1" width="13" height="4" fill="#fffffb"/><rect x="1" y="5" width="13" height="5" fill="#fffde6"/><rect x="0" y="0" width="15" height="1" fill="#b89c62"/><rect x="0" y="0" width="1" height="11" fill="#b89c62"/><rect x="0" y="10" width="15" height="1" fill="#5f4a34"/><rect x="14" y="1" width="1" height="10" fill="#5f4a34"/><rect x="2" y="3" width="5" height="1" fill="#0a0a96"/><rect x="8" y="3" width="2" height="1" fill="#0a0a96"/><rect x="11" y="3" width="2" height="1" fill="#0a0a96"/><rect x="2" y="5" width="3" height="1" fill="#0a0a96"/><rect x="6" y="5" width="4" height="1" fill="#0a0a96"/><rect x="2" y="7" width="4" height="1" fill="#0a0a96"/><rect x="7" y="7" width="5" height="1" fill="#0a0a96"/></svg>
<div class="row" style="left:84px;top:196px">AllocTaxBal</div>
<svg style="left:63px;top:217px" width="15" height="11" viewBox="0 0 15 11" shape-rendering="crispEdges"><rect x="1" y="1" width="13" height="4" fill="#fffffb"/><rect x="1" y="5" width="13" height="5" fill="#fffde6"/><rect x="0" y="0" width="15" height="1" fill="#b89c62"/><rect x="0" y="0" width="1" height="11" fill="#b89c62"/><rect x="0" y="10" width="15" height="1" fill="#5f4a34"/><rect x="14" y="1" width="1" height="10" fill="#5f4a34"/><rect x="2" y="3" width="5" height="1" fill="#0a0a96"/><rect x="8" y="3" width="2" height="1" fill="#0a0a96"/><rect x="11" y="3" width="2" height="1" fill="#0a0a96"/><rect x="2" y="5" width="3" height="1" fill="#0a0a96"/><rect x="6" y="5" width="4" height="1" fill="#0a0a96"/><rect x="2" y="7" width="4" height="1" fill="#0a0a96"/><rect x="7" y="7" width="5" height="1" fill="#0a0a96"/></svg>
<div class="row" style="left:84px;top:214px">Company</div>
<svg style="left:63px;top:235px" width="15" height="11" viewBox="0 0 15 11" shape-rendering="crispEdges"><rect x="1" y="1" width="13" height="4" fill="#fffffb"/><rect x="1" y="5" width="13" height="5" fill="#fffde6"/><rect x="0" y="0" width="15" height="1" fill="#b89c62"/><rect x="0" y="0" width="1" height="11" fill="#b89c62"/><rect x="0" y="10" width="15" height="1" fill="#5f4a34"/><rect x="14" y="1" width="1" height="10" fill="#5f4a34"/><rect x="2" y="3" width="5" height="1" fill="#0a0a96"/><rect x="8" y="3" width="2" height="1" fill="#0a0a96"/><rect x="11" y="3" width="2" height="1" fill="#0a0a96"/><rect x="2" y="5" width="3" height="1" fill="#0a0a96"/><rect x="6" y="5" width="4" height="1" fill="#0a0a96"/><rect x="2" y="7" width="4" height="1" fill="#0a0a96"/><rect x="7" y="7" width="5" height="1" fill="#0a0a96"/></svg>
<div class="row" style="left:84px;top:232px">CurrencyCode</div>
<svg style="left:63px;top:253px" width="15" height="11" viewBox="0 0 15 11" shape-rendering="crispEdges"><rect x="1" y="1" width="13" height="4" fill="#fffffb"/><rect x="1" y="5" width="13" height="5" fill="#fffde6"/><rect x="0" y="0" width="15" height="1" fill="#b89c62"/><rect x="0" y="0" width="1" height="11" fill="#b89c62"/><rect x="0" y="10" width="15" height="1" fill="#5f4a34"/><rect x="14" y="1" width="1" height="10" fill="#5f4a34"/><rect x="2" y="3" width="5" height="1" fill="#0a0a96"/><rect x="8" y="3" width="2" height="1" fill="#0a0a96"/><rect x="11" y="3" width="2" height="1" fill="#0a0a96"/><rect x="2" y="5" width="3" height="1" fill="#0a0a96"/><rect x="6" y="5" width="4" height="1" fill="#0a0a96"/><rect x="2" y="7" width="4" height="1" fill="#0a0a96"/><rect x="7" y="7" width="5" height="1" fill="#0a0a96"/></svg>
<div class="row" style="left:84px;top:250px">CurrencySwitch</div>
<svg style="left:0;top:0" width="203" height="1067" viewBox="0 0 203 1067"><path d="M62 266.5 L86 265.6 L138 265.3 L150 266 L150 282.7 L144 283.2 L144 290 L98 290 L68 287.6 L62 286 Z" fill="#ffff00"/></svg>
<svg style="left:63px;top:271px" width="15" height="11" viewBox="0 0 15 11" shape-rendering="crispEdges"><rect x="1" y="1" width="13" height="9" fill="#ffff00"/><rect x="0" y="0" width="15" height="1" fill="#8a7a1e"/><rect x="0" y="0" width="1" height="11" fill="#8a7a1e"/><rect x="0" y="10" width="15" height="1" fill="#4e4212"/><rect x="14" y="1" width="1" height="10" fill="#4e4212"/><rect x="2" y="3" width="5" height="1" fill="#15150a"/><rect x="8" y="3" width="2" height="1" fill="#15150a"/><rect x="11" y="3" width="2" height="1" fill="#15150a"/><rect x="2" y="5" width="3" height="1" fill="#15150a"/><rect x="6" y="5" width="4" height="1" fill="#15150a"/><rect x="2" y="7" width="4" height="1" fill="#15150a"/><rect x="7" y="7" width="5" height="1" fill="#15150a"/></svg>
<div class="row" style="left:84px;top:268px">CustNum</div>
<svg style="left:63px;top:289px" width="15" height="11" viewBox="0 0 15 11" shape-rendering="crispEdges"><rect x="1" y="1" width="13" height="4" fill="#fffffb"/><rect x="1" y="5" width="13" height="5" fill="#fffde6"/><rect x="0" y="0" width="15" height="1" fill="#b89c62"/><rect x="0" y="0" width="1" height="11" fill="#b89c62"/><rect x="0" y="10" width="15" height="1" fill="#5f4a34"/><rect x="14" y="1" width="1" height="10" fill="#5f4a34"/><rect x="2" y="3" width="5" height="1" fill="#0a0a96"/><rect x="8" y="3" width="2" height="1" fill="#0a0a96"/><rect x="11" y="3" width="2" height="1" fill="#0a0a96"/><rect x="2" y="5" width="3" height="1" fill="#0a0a96"/><rect x="6" y="5" width="4" height="1" fill="#0a0a96"/><rect x="2" y="7" width="4" height="1" fill="#0a0a96"/><rect x="7" y="7" width="5" height="1" fill="#0a0a96"/></svg>
<div class="row" style="left:84px;top:286px">DepApplyDate</div>
<svg style="left:63px;top:307px" width="15" height="11" viewBox="0 0 15 11" shape-rendering="crispEdges"><rect x="1" y="1" width="13" height="4" fill="#fffffb"/><rect x="1" y="5" width="13" height="5" fill="#fffde6"/><rect x="0" y="0" width="15" height="1" fill="#b89c62"/><rect x="0" y="0" width="1" height="11" fill="#b89c62"/><rect x="0" y="10" width="15" height="1" fill="#5f4a34"/><rect x="14" y="1" width="1" height="10" fill="#5f4a34"/><rect x="2" y="3" width="5" height="1" fill="#0a0a96"/><rect x="8" y="3" width="2" height="1" fill="#0a0a96"/><rect x="11" y="3" width="2" height="1" fill="#0a0a96"/><rect x="2" y="5" width="3" height="1" fill="#0a0a96"/><rect x="6" y="5" width="4" height="1" fill="#0a0a96"/><rect x="2" y="7" width="4" height="1" fill="#0a0a96"/><rect x="7" y="7" width="5" height="1" fill="#0a0a96"/></svg>
<div class="row" style="left:84px;top:304px">DepCheckRef</div>
<svg style="left:63px;top:325px" width="15" height="11" viewBox="0 0 15 11" shape-rendering="crispEdges"><rect x="1" y="1" width="13" height="4" fill="#fffffb"/><rect x="1" y="5" width="13" height="5" fill="#fffde6"/><rect x="0" y="0" width="15" height="1" fill="#b89c62"/><rect x="0" y="0" width="1" height="11" fill="#b89c62"/><rect x="0" y="10" width="15" height="1" fill="#5f4a34"/><rect x="14" y="1" width="1" height="10" fill="#5f4a34"/><rect x="2" y="3" width="5" height="1" fill="#0a0a96"/><rect x="8" y="3" width="2" height="1" fill="#0a0a96"/><rect x="11" y="3" width="2" height="1" fill="#0a0a96"/><rect x="2" y="5" width="3" height="1" fill="#0a0a96"/><rect x="6" y="5" width="4" height="1" fill="#0a0a96"/><rect x="2" y="7" width="4" height="1" fill="#0a0a96"/><rect x="7" y="7" width="5" height="1" fill="#0a0a96"/></svg>
<div class="row" style="left:84px;top:322px">DepGroupID</div>
<svg style="left:63px;top:343px" width="15" height="11" viewBox="0 0 15 11" shape-rendering="crispEdges"><rect x="1" y="1" width="13" height="4" fill="#fffffb"/><rect x="1" y="5" width="13" height="5" fill="#fffde6"/><rect x="0" y="0" width="15" height="1" fill="#b89c62"/><rect x="0" y="0" width="1" height="11" fill="#b89c62"/><rect x="0" y="10" width="15" height="1" fill="#5f4a34"/><rect x="14" y="1" width="1" height="10" fill="#5f4a34"/><rect x="2" y="3" width="5" height="1" fill="#0a0a96"/><rect x="8" y="3" width="2" height="1" fill="#0a0a96"/><rect x="11" y="3" width="2" height="1" fill="#0a0a96"/><rect x="2" y="5" width="3" height="1" fill="#0a0a96"/><rect x="6" y="5" width="4" height="1" fill="#0a0a96"/><rect x="2" y="7" width="4" height="1" fill="#0a0a96"/><rect x="7" y="7" width="5" height="1" fill="#0a0a96"/></svg>
<div class="row" style="left:84px;top:340px">DepHeadNum</div>
<svg style="left:63px;top:361px" width="15" height="11" viewBox="0 0 15 11" shape-rendering="crispEdges"><rect x="1" y="1" width="13" height="4" fill="#fffffb"/><rect x="1" y="5" width="13" height="5" fill="#fffde6"/><rect x="0" y="0" width="15" height="1" fill="#b89c62"/><rect x="0" y="0" width="1" height="11" fill="#b89c62"/><rect x="0" y="10" width="15" height="1" fill="#5f4a34"/><rect x="14" y="1" width="1" height="10" fill="#5f4a34"/><rect x="2" y="3" width="5" height="1" fill="#0a0a96"/><rect x="8" y="3" width="2" height="1" fill="#0a0a96"/><rect x="11" y="3" width="2" height="1" fill="#0a0a96"/><rect x="2" y="5" width="3" height="1" fill="#0a0a96"/><rect x="6" y="5" width="4" height="1" fill="#0a0a96"/><rect x="2" y="7" width="4" height="1" fill="#0a0a96"/><rect x="7" y="7" width="5" height="1" fill="#0a0a96"/></svg>
<div class="row" style="left:84px;top:358px">DepInvoiceNum</div>
<svg style="left:63px;top:379px" width="15" height="11" viewBox="0 0 15 11" shape-rendering="crispEdges"><rect x="1" y="1" width="13" height="4" fill="#fffffb"/><rect x="1" y="5" width="13" height="5" fill="#fffde6"/><rect x="0" y="0" width="15" height="1" fill="#b89c62"/><rect x="0" y="0" width="1" height="11" fill="#b89c62"/><rect x="0" y="10" width="15" height="1" fill="#5f4a34"/><rect x="14" y="1" width="1" height="10" fill="#5f4a34"/><rect x="2" y="3" width="5" height="1" fill="#0a0a96"/><rect x="8" y="3" width="2" height="1" fill="#0a0a96"/><rect x="11" y="3" width="2" height="1" fill="#0a0a96"/><rect x="2" y="5" width="3" height="1" fill="#0a0a96"/><rect x="6" y="5" width="4" height="1" fill="#0a0a96"/><rect x="2" y="7" width="4" height="1" fill="#0a0a96"/><rect x="7" y="7" width="5" height="1" fill="#0a0a96"/></svg>
<div class="row" style="left:84px;top:376px">DocAllocAmt</div>
<svg style="left:63px;top:397px" width="15" height="11" viewBox="0 0 15 11" shape-rendering="crispEdges"><rect x="1" y="1" width="13" height="4" fill="#fffffb"/><rect x="1" y="5" width="13" height="5" fill="#fffde6"/><rect x="0" y="0" width="15" height="1" fill="#b89c62"/><rect x="0" y="0" width="1" height="11" fill="#b89c62"/><rect x="0" y="10" width="15" height="1" fill="#5f4a34"/><rect x="14" y="1" width="1" height="10" fill="#5f4a34"/><rect x="2" y="3" width="5" height="1" fill="#0a0a96"/><rect x="8" y="3" width="2" height="1" fill="#0a0a96"/><rect x="11" y="3" width="2" height="1" fill="#0a0a96"/><rect x="2" y="5" width="3" height="1" fill="#0a0a96"/><rect x="6" y="5" width="4" height="1" fill="#0a0a96"/><rect x="2" y="7" width="4" height="1" fill="#0a0a96"/><rect x="7" y="7" width="5" height="1" fill="#0a0a96"/></svg>
<div class="row" style="left:84px;top:394px">DocAllocBal</div>
<svg style="left:63px;top:415px" width="15" height="11" viewBox="0 0 15 11" shape-rendering="crispEdges"><rect x="1" y="1" width="13" height="4" fill="#fffffb"/><rect x="1" y="5" width="13" height="5" fill="#fffde6"/><rect x="0" y="0" width="15" height="1" fill="#b89c62"/><rect x="0" y="0" width="1" height="11" fill="#b89c62"/><rect x="0" y="10" width="15" height="1" fill="#5f4a34"/><rect x="14" y="1" width="1" height="10" fill="#5f4a34"/><rect x="2" y="3" width="5" height="1" fill="#0a0a96"/><rect x="8" y="3" width="2" height="1" fill="#0a0a96"/><rect x="11" y="3" width="2" height="1" fill="#0a0a96"/><rect x="2" y="5" width="3" height="1" fill="#0a0a96"/><rect x="6" y="5" width="4" height="1" fill="#0a0a96"/><rect x="2" y="7" width="4" height="1" fill="#0a0a96"/><rect x="7" y="7" width="5" height="1" fill="#0a0a96"/></svg>
<div class="row" style="left:84px;top:412px">DocAllocTaxBal</div>
<svg style="left:63px;top:433px" width="15" height="11" viewBox="0 0 15 11" shape-rendering="crispEdges"><rect x="1" y="1" width="13" height="4" fill="#fffffb"/><rect x="1" y="5" width="13" height="5" fill="#fffde6"/><rect x="0" y="0" width="15" height="1" fill="#b89c62"/><rect x="0" y="0" width="1" height="11" fill="#b89c62"/><rect x="0" y="10" width="15" height="1" fill="#5f4a34"/><rect x="14" y="1" width="1" height="10" fill="#5f4a34"/><rect x="2" y="3" width="5" height="1" fill="#0a0a96"/><rect x="8" y="3" width="2" height="1" fill="#0a0a96"/><rect x="11" y="3" width="2" height="1" fill="#0a0a96"/><rect x="2" y="5" width="3" height="1" fill="#0a0a96"/><rect x="6" y="5" width="4" height="1" fill="#0a0a96"/><rect x="2" y="7" width="4" height="1" fill="#0a0a96"/><rect x="7" y="7" width="5" height="1" fill="#0a0a96"/></svg>
<div class="row" style="left:84px;top:430px">DocDocumentAmt</div>
<svg style="left:63px;top:451px" width="15" height="11" viewBox="0 0 15 11" shape-rendering="crispEdges"><rect x="1" y="1" width="13" height="4" fill="#fffffb"/><rect x="1" y="5" width="13" height="5" fill="#fffde6"/><rect x="0" y="0" width="15" height="1" fill="#b89c62"/><rect x="0" y="0" width="1" height="11" fill="#b89c62"/><rect x="0" y="10" width="15" height="1" fill="#5f4a34"/><rect x="14" y="1" width="1" height="10" fill="#5f4a34"/><rect x="2" y="3" width="5" height="1" fill="#0a0a96"/><rect x="8" y="3" width="2" height="1" fill="#0a0a96"/><rect x="11" y="3" width="2" height="1" fill="#0a0a96"/><rect x="2" y="5" width="3" height="1" fill="#0a0a96"/><rect x="6" y="5" width="4" height="1" fill="#0a0a96"/><rect x="2" y="7" width="4" height="1" fill="#0a0a96"/><rect x="7" y="7" width="5" height="1" fill="#0a0a96"/></svg>
<div class="row" style="left:84px;top:448px">DocTaxAmt</div>
<svg style="left:63px;top:469px" width="15" height="11" viewBox="0 0 15 11" shape-rendering="crispEdges"><rect x="1" y="1" width="13" height="4" fill="#fffffb"/><rect x="1" y="5" width="13" height="5" fill="#fffde6"/><rect x="0" y="0" width="15" height="1" fill="#b89c62"/><rect x="0" y="0" width="1" height="11" fill="#b89c62"/><rect x="0" y="10" width="15" height="1" fill="#5f4a34"/><rect x="14" y="1" width="1" height="10" fill="#5f4a34"/><rect x="2" y="3" width="5" height="1" fill="#0a0a96"/><rect x="8" y="3" width="2" height="1" fill="#0a0a96"/><rect x="11" y="3" width="2" height="1" fill="#0a0a96"/><rect x="2" y="5" width="3" height="1" fill="#0a0a96"/><rect x="6" y="5" width="4" height="1" fill="#0a0a96"/><rect x="2" y="7" width="4" height="1" fill="#0a0a96"/><rect x="7" y="7" width="5" height="1" fill="#0a0a96"/></svg>
<div class="row" style="left:84px;top:466px">DocumentAmt</div>
<svg style="left:63px;top:487px" width="15" height="11" viewBox="0 0 15 11" shape-rendering="crispEdges"><rect x="1" y="1" width="13" height="4" fill="#fffffb"/><rect x="1" y="5" width="13" height="5" fill="#fffde6"/><rect x="0" y="0" width="15" height="1" fill="#b89c62"/><rect x="0" y="0" width="1" height="11" fill="#b89c62"/><rect x="0" y="10" width="15" height="1" fill="#5f4a34"/><rect x="14" y="1" width="1" height="10" fill="#5f4a34"/><rect x="2" y="3" width="5" height="1" fill="#0a0a96"/><rect x="8" y="3" width="2" height="1" fill="#0a0a96"/><rect x="11" y="3" width="2" height="1" fill="#0a0a96"/><rect x="2" y="5" width="3" height="1" fill="#0a0a96"/><rect x="6" y="5" width="4" height="1" fill="#0a0a96"/><rect x="2" y="7" width="4" height="1" fill="#0a0a96"/><rect x="7" y="7" width="5" height="1" fill="#0a0a96"/></svg>
<div class="row" style="left:84px;top:484px">Rpt3TaxAmt</div>
<svg style="left:63px;top:505px" width="15" height="11" viewBox="0 0 15 11" shape-rendering="crispEdges"><rect x="1" y="1" width="13" height="4" fill="#fffffb"/><rect x="1" y="5" width="13" height="5" fill="#fffde6"/><rect x="0" y="0" width="15" height="1" fill="#b89c62"/><rect x="0" y="0" width="1" height="11" fill="#b89c62"/><rect x="0" y="10" width="15" height="1" fill="#5f4a34"/><rect x="14" y="1" width="1" height="10" fill="#5f4a34"/><rect x="2" y="3" width="5" height="1" fill="#0a0a96"/><rect x="8" y="3" width="2" height="1" fill="#0a0a96"/><rect x="11" y="3" width="2" height="1" fill="#0a0a96"/><rect x="2" y="5" width="3" height="1" fill="#0a0a96"/><rect x="6" y="5" width="4" height="1" fill="#0a0a96"/><rect x="2" y="7" width="4" height="1" fill="#0a0a96"/><rect x="7" y="7" width="5" height="1" fill="#0a0a96"/></svg>
<div class="row" style="left:84px;top:502px">InvoiceNum</div>
<svg style="left:0;top:0" width="203" height="1067" viewBox="0 0 203 1067"><path d="M61 522 L79 521.5 L80 521 L130 520.2 L138 519.3 L156 519.3 L156 520 L164 520 L164 535.7 L150 536 L149 537 L122 537 L121 537.8 L61 537.8 Z" fill="#ffff00"/></svg>
<svg style="left:63px;top:523px" width="15" height="11" viewBox="0 0 15 11" shape-rendering="crispEdges"><rect x="1" y="1" width="13" height="9" fill="#ffff00"/><rect x="0" y="0" width="15" height="1" fill="#8a7a1e"/><rect x="0" y="0" width="1" height="11" fill="#8a7a1e"/><rect x="0" y="10" width="15" height="1" fill="#4e4212"/><rect x="14" y="1" width="1" height="10" fill="#4e4212"/><rect x="2" y="3" width="5" height="1" fill="#15150a"/><rect x="8" y="3" width="2" height="1" fill="#15150a"/><rect x="11" y="3" width="2" height="1" fill="#15150a"/><rect x="2" y="5" width="3" height="1" fill="#15150a"/><rect x="6" y="5" width="4" height="1" fill="#15150a"/><rect x="2" y="7" width="4" height="1" fill="#15150a"/><rect x="7" y="7" width="5" height="1" fill="#15150a"/></svg>
<div class="row" style="left:84px;top:520px">LegalNumber</div>
<svg style="left:63px;top:541px" width="15" height="11" viewBox="0 0 15 11" shape-rendering="crispEdges"><rect x="1" y="1" width="13" height="4" fill="#fffffb"/><rect x="1" y="5" width="13" height="5" fill="#fffde6"/><rect x="0" y="0" width="15" height="1" fill="#b89c62"/><rect x="0" y="0" width="1" height="11" fill="#b89c62"/><rect x="0" y="10" width="15" height="1" fill="#5f4a34"/><rect x="14" y="1" width="1" height="10" fill="#5f4a34"/><rect x="2" y="3" width="5" height="1" fill="#0a0a96"/><rect x="8" y="3" width="2" height="1" fill="#0a0a96"/><rect x="11" y="3" width="2" height="1" fill="#0a0a96"/><rect x="2" y="5" width="3" height="1" fill="#0a0a96"/><rect x="6" y="5" width="4" height="1" fill="#0a0a96"/><rect x="2" y="7" width="4" height="1" fill="#0a0a96"/><rect x="7" y="7" width="5" height="1" fill="#0a0a96"/></svg>
<div class="row" style="left:84px;top:538px">OrderNum</div>
<svg style="left:63px;top:559px" width="15" height="11" viewBox="0 0 15 11" shape-rendering="crispEdges"><rect x="1" y="1" width="13" height="4" fill="#fffffb"/><rect x="1" y="5" width="13" height="5" fill="#fffde6"/><rect x="0" y="0" width="15" height="1" fill="#b89c62"/><rect x="0" y="0" width="1" height="11" fill="#b89c62"/><rect x="0" y="10" width="15" height="1" fill="#5f4a34"/><rect x="14" y="1" width="1" height="10" fill="#5f4a34"/><rect x="2" y="3" width="5" height="1" fill="#0a0a96"/><rect x="8" y="3" width="2" height="1" fill="#0a0a96"/><rect x="11" y="3" width="2" height="1" fill="#0a0a96"/><rect x="2" y="5" width="3" height="1" fill="#0a0a96"/><rect x="6" y="5" width="4" height="1" fill="#0a0a96"/><rect x="2" y="7" width="4" height="1" fill="#0a0a96"/><rect x="7" y="7" width="5" height="1" fill="#0a0a96"/></svg>
<div class="row" style="left:84px;top:556px">PrePayStatus</div>
<svg style="left:63px;top:577px" width="15" height="11" viewBox="0 0 15 11" shape-rendering="crispEdges"><rect x="1" y="1" width="13" height="4" fill="#fffffb"/><rect x="1" y="5" width="13" height="5" fill="#fffde6"/><rect x="0" y="0" width="15" height="1" fill="#b89c62"/><rect x="0" y="0" width="1" height="11" fill="#b89c62"/><rect x="0" y="10" width="15" height="1" fill="#5f4a34"/><rect x="14" y="1" width="1" height="10" fill="#5f4a34"/><rect x="2" y="3" width="5" height="1" fill="#0a0a96"/><rect x="8" y="3" width="2" height="1" fill="#0a0a96"/><rect x="11" y="3" width="2" height="1" fill="#0a0a96"/><rect x="2" y="5" width="3" height="1" fill="#0a0a96"/><rect x="6" y="5" width="4" height="1" fill="#0a0a96"/><rect x="2" y="7" width="4" height="1" fill="#0a0a96"/><rect x="7" y="7" width="5" height="1" fill="#0a0a96"/></svg>
<div class="row" style="left:84px;top:574px">PrePayType</div>
<svg style="left:63px;top:595px" width="15" height="11" viewBox="0 0 15 11" shape-rendering="crispEdges"><rect x="1" y="1" width="13" height="4" fill="#fffffb"/><rect x="1" y="5" width="13" height="5" fill="#fffde6"/><rect x="0" y="0" width="15" height="1" fill="#b89c62"/><rect x="0" y="0" width="1" height="11" fill="#b89c62"/><rect x="0" y="10" width="15" height="1" fill="#5f4a34"/><rect x="14" y="1" width="1" height="10" fill="#5f4a34"/><rect x="2" y="3" width="5" height="1" fill="#0a0a96"/><rect x="8" y="3" width="2" height="1" fill="#0a0a96"/><rect x="11" y="3" width="2" height="1" fill="#0a0a96"/><rect x="2" y="5" width="3" height="1" fill="#0a0a96"/><rect x="6" y="5" width="4" height="1" fill="#0a0a96"/><rect x="2" y="7" width="4" height="1" fill="#0a0a96"/><rect x="7" y="7" width="5" height="1" fill="#0a0a96"/></svg>
<div class="row" style="left:84px;top:592px">Reference</div>
<svg style="left:63px;top:613px" width="15" height="11" viewBox="0 0 15 11" shape-rendering="crispEdges"><rect x="1" y="1" width="13" height="4" fill="#fffffb"/><rect x="1" y="5" width="13" height="5" fill="#fffde6"/><rect x="0" y="0" width="15" height="1" fill="#b89c62"/><rect x="0" y="0" width="1" height="11" fill="#b89c62"/><rect x="0" y="10" width="15" height="1" fill="#5f4a34"/><rect x="14" y="1" width="1" height="10" fill="#5f4a34"/><rect x="2" y="3" width="5" height="1" fill="#0a0a96"/><rect x="8" y="3" width="2" height="1" fill="#0a0a96"/><rect x="11" y="3" width="2" height="1" fill="#0a0a96"/><rect x="2" y="5" width="3" height="1" fill="#0a0a96"/><rect x="6" y="5" width="4" height="1" fill="#0a0a96"/><rect x="2" y="7" width="4" height="1" fill="#0a0a96"/><rect x="7" y="7" width="5" height="1" fill="#0a0a96"/></svg>
<div class="row" style="left:84px;top:610px">Rpt1AllocAmt</div>
<svg style="left:63px;top:631px" width="15" height="11" viewBox="0 0 15 11" shape-rendering="crispEdges"><rect x="1" y="1" width="13" height="4" fill="#fffffb"/><rect x="1" y="5" width="13" height="5" fill="#fffde6"/><rect x="0" y="0" width="15" height="1" fill="#b89c62"/><rect x="0" y="0" width="1" height="11" fill="#b89c62"/><rect x="0" y="10" width="15" height="1" fill="#5f4a34"/><rect x="14" y="1" width="1" height="10" fill="#5f4a34"/><rect x="2" y="3" width="5" height="1" fill="#0a0a96"/><rect x="8" y="3" width="2" height="1" fill="#0a0a96"/><rect x="11" y="3" width="2" height="1" fill="#0a0a96"/><rect x="2" y="5" width="3" height="1" fill="#0a0a96"/><rect x="6" y="5" width="4" height="1" fill="#0a0a96"/><rect x="2" y="7" width="4" height="1" fill="#0a0a96"/><rect x="7" y="7" width="5" height="1" fill="#0a0a96"/></svg>
<div class="row" style="left:84px;top:628px">Rpt1AllocBal</div>
<svg style="left:63px;top:649px" width="15" height="11" viewBox="0 0 15 11" shape-rendering="crispEdges"><rect x="1" y="1" width="13" height="4" fill="#fffffb"/><rect x="1" y="5" width="13" height="5" fill="#fffde6"/><rect x="0" y="0" width="15" height="1" fill="#b89c62"/><rect x="0" y="0" width="1" height="11" fill="#b89c62"/><rect x="0" y="10" width="15" height="1" fill="#5f4a34"/><rect x="14" y="1" width="1" height="10" fill="#5f4a34"/><rect x="2" y="3" width="5" height="1" fill="#0a0a96"/><rect x="8" y="3" width="2" height="1" fill="#0a0a96"/><rect x="11" y="3" width="2" height="1" fill="#0a0a96"/><rect x="2" y="5" width="3" height="1" fill="#0a0a96"/><rect x="6" y="5" width="4" height="1" fill="#0a0a96"/><rect x="2" y="7" width="4" height="1" fill="#0a0a96"/><rect x="7" y="7" width="5" height="1" fill="#0a0a96"/></svg>
<div class="row" style="left:84px;top:646px">Rpt1AllocTaxBal</div>
<svg style="left:63px;top:667px" width="15" height="11" viewBox="0 0 15 11" shape-rendering="crispEdges"><rect x="1" y="1" width="13" height="4" fill="#fffffb"/><rect x="1" y="5" width="13" height="5" fill="#fffde6"/><rect x="0" y="0" width="15" height="1" fill="#b89c62"/><rect x="0" y="0" width="1" height="11" fill="#b89c62"/><rect x="0" y="10" width="15" height="1" fill="#5f4a34"/><rect x="14" y="1" width="1" height="10" fill="#5f4a34"/><rect x="2" y="3" width="5" height="1" fill="#0a0a96"/><rect x="8" y="3" width="2" height="1" fill="#0a0a96"/><rect x="11" y="3" width="2" height="1" fill="#0a0a96"/><rect x="2" y="5" width="3" height="1" fill="#0a0a96"/><rect x="6" y="5" width="4" height="1" fill="#0a0a96"/><rect x="2" y="7" width="4" height="1" fill="#0a0a96"/><rect x="7" y="7" width="5" height="1" fill="#0a0a96"/></svg>
<div class="row" style="left:84px;top:664px">Rpt1DocumentAmt</div>
<svg style="left:63px;top:685px" width="15" height="11" viewBox="0 0 15 11" shape-rendering="crispEdges"><rect x="1" y="1" width="13" height="4" fill="#fffffb"/><rect x="1" y="5" width="13" height="5" fill="#fffde6"/><rect x="0" y="0" width="15" height="1" fill="#b89c62"/><rect x="0" y="0" width="1" height="11" fill="#b89c62"/><rect x="0" y="10" width="15" height="1" fill="#5f4a34"/><rect x="14" y="1" width="1" height="10" fill="#5f4a34"/><rect x="2" y="3" width="5" height="1" fill="#0a0a96"/><rect x="8" y="3" width="2" height="1" fill="#0a0a96"/><rect x="11" y="3" width="2" height="1" fill="#0a0a96"/><rect x="2" y="5" width="3" height="1" fill="#0a0a96"/><rect x="6" y="5" width="4" height="1" fill="#0a0a96"/><rect x="2" y="7" width="4" height="1" fill="#0a0a96"/><rect x="7" y="7" width="5" height="1" fill="#0a0a96"/></svg>
<div class="row" style="left:84px;top:682px">Rpt1TaxAmt</div>
<svg style="left:63px;top:703px" width="15" height="11" viewBox="0 0 15 11" shape-rendering="crispEdges"><rect x="1" y="1" width="13" height="4" fill="#fffffb"/><rect x="1" y="5" width="13" height="5" fill="#fffde6"/><rect x="0" y="0" width="15" height="1" fill="#b89c62"/><rect x="0" y="0" width="1" height="11" fill="#b89c62"/><rect x="0" y="10" width="15" height="1" fill="#5f4a34"/><rect x="14" y="1" width="1" height="10" fill="#5f4a34"/><rect x="2" y="3" width="5" height="1" fill="#0a0a96"/><rect x="8" y="3" width="2" height="1" fill="#0a0a96"/><rect x="11" y="3" width="2" height="1" fill="#0a0a96"/><rect x="2" y="5" width="3" height="1" fill="#0a0a96"/><rect x="6" y="5" width="4" height="1" fill="#0a0a96"/><rect x="2" y="7" width="4" height="1" fill="#0a0a96"/><rect x="7" y="7" width="5" height="1" fill="#0a0a96"/></svg>
<div class="row" style="left:84px;top:700px">Rpt2AllocAmt</div>
<svg style="left:63px;top:721px" width="15" height="11" viewBox="0 0 15 11" shape-rendering="crispEdges"><rect x="1" y="1" width="13" height="4" fill="#fffffb"/><rect x="1" y="5" width="13" height="5" fill="#fffde6"/><rect x="0" y="0" width="15" height="1" fill="#b89c62"/><rect x="0" y="0" width="1" height="11" fill="#b89c62"/><rect x="0" y="10" width="15" height="1" fill="#5f4a34"/><rect x="14" y="1" width="1" height="10" fill="#5f4a34"/><rect x="2" y="3" width="5" height="1" fill="#0a0a96"/><rect x="8" y="3" width="2" height="1" fill="#0a0a96"/><rect x="11" y="3" width="2" height="1" fill="#0a0a96"/><rect x="2" y="5" width="3" height="1" fill="#0a0a96"/><rect x="6" y="5" width="4" height="1" fill="#0a0a96"/><rect x="2" y="7" width="4" height="1" fill="#0a0a96"/><rect x="7" y="7" width="5" height="1" fill="#0a0a96"/></svg>
<div class="row" style="left:84px;top:718px">Rpt2AllocBal</div>
<svg style="left:63px;top:739px" width="15" height="11" viewBox="0 0 15 11" shape-rendering="crispEdges"><rect x="1" y="1" width="13" height="4" fill="#fffffb"/><rect x="1" y="5" width="13" height="5" fill="#fffde6"/><rect x="0" y="0" width="15" height="1" fill="#b89c62"/><rect x="0" y="0" width="1" height="11" fill="#b89c62"/><rect x="0" y="10" width="15" height="1" fill="#5f4a34"/><rect x="14" y="1" width="1" height="10" fill="#5f4a34"/><rect x="2" y="3" width="5" height="1" fill="#0a0a96"/><rect x="8" y="3" width="2" height="1" fill="#0a0a96"/><rect x="11" y="3" width="2" height="1" fill="#0a0a96"/><rect x="2" y="5" width="3" height="1" fill="#0a0a96"/><rect x="6" y="5" width="4" height="1" fill="#0a0a96"/><rect x="2" y="7" width="4" height="1" fill="#0a0a96"/><rect x="7" y="7" width="5" height="1" fill="#0a0a96"/></svg>
<div class="row" style="left:84px;top:736px">Rpt2AllocTaxBal</div>
<svg style="left:63px;top:757px" width="15" height="11" viewBox="0 0 15 11" shape-rendering="crispEdges"><rect x="1" y="1" width="13" height="4" fill="#fffffb"/><rect x="1" y="5" width="13" height="5" fill="#fffde6"/><rect x="0" y="0" width="15" height="1" fill="#b89c62"/><rect x="0" y="0" width="1" height="11" fill="#b89c62"/><rect x="0" y="10" width="15" height="1" fill="#5f4a34"/><rect x="14" y="1" width="1" height="10" fill="#5f4a34"/><rect x="2" y="3" width="5" height="1" fill="#0a0a96"/><rect x="8" y="3" width="2" height="1" fill="#0a0a96"/><rect x="11" y="3" width="2" height="1" fill="#0a0a96"/><rect x="2" y="5" width="3" height="1" fill="#0a0a96"/><rect x="6" y="5" width="4" height="1" fill="#0a0a96"/><rect x="2" y="7" width="4" height="1" fill="#0a0a96"/><rect x="7" y="7" width="5" height="1" fill="#0a0a96"/></svg>
<div class="row" style="left:84px;top:754px">Rpt2DocumentAmt</div>
<svg style="left:63px;top:775px" width="15" height="11" viewBox="0 0 15 11" shape-rendering="crispEdges"><rect x="1" y="1" width="13" height="4" fill="#fffffb"/><rect x="1" y="5" width="13" height="5" fill="#fffde6"/><rect x="0" y="0" width="15" height="1" fill="#b89c62"/><rect x="0" y="0" width="1" height="11" fill="#b89c62"/><rect x="0" y="10" width="15" height="1" fill="#5f4a34"/><rect x="14" y="1" width="1" height="10" fill="#5f4a34"/><rect x="2" y="3" width="5" height="1" fill="#0a0a96"/><rect x="8" y="3" width="2" height="1" fill="#0a0a96"/><rect x="11" y="3" width="2" height="1" fill="#0a0a96"/><rect x="2" y="5" width="3" height="1" fill="#0a0a96"/><rect x="6" y="5" width="4" height="1" fill="#0a0a96"/><rect x="2" y="7" width="4" height="1" fill="#0a0a96"/><rect x="7" y="7" width="5" height="1" fill="#0a0a96"/></svg>
<div class="row" style="left:84px;top:772px">Rpt2TaxAmt</div>
<svg style="left:63px;top:793px" width="15" height="11" viewBox="0 0 15 11" shape-rendering="crispEdges"><rect x="1" y="1" width="13" height="4" fill="#fffffb"/><rect x="1" y="5" width="13" height="5" fill="#fffde6"/><rect x="0" y="0" width="15" height="1" fill="#b89c62"/><rect x="0" y="0" width="1" height="11" fill="#b89c62"/><rect x="0" y="10" width="15" height="1" fill="#5f4a34"/><rect x="14" y="1" width="1" height="10" fill="#5f4a34"/><rect x="2" y="3" width="5" height="1" fill="#0a0a96"/><rect x="8" y="3" width="2" height="1" fill="#0a0a96"/><rect x="11" y="3" width="2" height="1" fill="#0a0a96"/><rect x="2" y="5" width="3" height="1" fill="#0a0a96"/><rect x="6" y="5" width="4" height="1" fill="#0a0a96"/><rect x="2" y="7" width="4" height="1" fill="#0a0a96"/><rect x="7" y="7" width="5" height="1" fill="#0a0a96"/></svg>
<div class="row" style="left:84px;top:790px">Rpt3AllocAmt</div>
<svg style="left:63px;top:811px" width="15" height="11" viewBox="0 0 15 11" shape-rendering="crispEdges"><rect x="1" y="1" width="13" height="4" fill="#fffffb"/><rect x="1" y="5" width="13" height="5" fill="#fffde6"/><rect x="0" y="0" width="15" height="1" fill="#b89c62"/><rect x="0" y="0" width="1" height="11" fill="#b89c62"/><rect x="0" y="10" width="15" height="1" fill="#5f4a34"/><rect x="14" y="1" width="1" height="10" fill="#5f4a34"/><rect x="2" y="3" width="5" height="1" fill="#0a0a96"/><rect x="8" y="3" width="2" height="1" fill="#0a0a96"/><rect x="11" y="3" width="2" height="1" fill="#0a0a96"/><rect x="2" y="5" width="3" height="1" fill="#0a0a96"/><rect x="6" y="5" width="4" height="1" fill="#0a0a96"/><rect x="2" y="7" width="4" height="1" fill="#0a0a96"/><rect x="7" y="7" width="5" height="1" fill="#0a0a96"/></svg>
<div class="row" style="left:84px;top:808px">Rpt3AllocBal</div>
<svg style="left:63px;top:829px" width="15" height="11" viewBox="0 0 15 11" shape-rendering="crispEdges"><rect x="1" y="1" width="13" height="4" fill="#fffffb"/><rect x="1" y="5" width="13" height="5" fill="#fffde6"/><rect x="0" y="0" width="15" height="1" fill="#b89c62"/><rect x="0" y="0" width="1" height="11" fill="#b89c62"/><rect x="0" y="10" width="15" height="1" fill="#5f4a34"/><rect x="14" y="1" width="1" height="10" fill="#5f4a34"/><rect x="2" y="3" width="5" height="1" fill="#0a0a96"/><rect x="8" y="3" width="2" height="1" fill="#0a0a96"/><rect x="11" y="3" width="2" height="1" fill="#0a0a96"/><rect x="2" y="5" width="3" height="1" fill="#0a0a96"/><rect x="6" y="5" width="4" height="1" fill="#0a0a96"/><rect x="2" y="7" width="4" height="1" fill="#0a0a96"/><rect x="7" y="7" width="5" height="1" fill="#0a0a96"/></svg>
<div class="row" style="left:84px;top:826px">Rpt3AllocTaxBal</div>
<svg style="left:63px;top:847px" width="15" height="11" viewBox="0 0 15 11" shape-rendering="crispEdges"><rect x="1" y="1" width="13" height="4" fill="#fffffb"/><rect x="1" y="5" width="13" height="5" fill="#fffde6"/><rect x="0" y="0" width="15" height="1" fill="#b89c62"/><rect x="0" y="0" width="1" height="11" fill="#b89c62"/><rect x="0" y="10" width="15" height="1" fill="#5f4a34"/><rect x="14" y="1" width="1" height="10" fill="#5f4a34"/><rect x="2" y="3" width="5" height="1" fill="#0a0a96"/><rect x="8" y="3" width="2" height="1" fill="#0a0a96"/><rect x="11" y="3" width="2" height="1" fill="#0a0a96"/><rect x="2" y="5" width="3" height="1" fill="#0a0a96"/><rect x="6" y="5" width="4" height="1" fill="#0a0a96"/><rect x="2" y="7" width="4" height="1" fill="#0a0a96"/><rect x="7" y="7" width="5" height="1" fill="#0a0a96"/></svg>
<div class="row" style="left:84px;top:844px">Rpt3DocumentAmt</div>
<svg style="left:63px;top:865px" width="15" height="11" viewBox="0 0 15 11" shape-rendering="crispEdges"><rect x="1" y="1" width="13" height="4" fill="#fffffb"/><rect x="1" y="5" width="13" height="5" fill="#fffde6"/><rect x="0" y="0" width="15" height="1" fill="#b89c62"/><rect x="0" y="0" width="1" height="11" fill="#b89c62"/><rect x="0" y="10" width="15" height="1" fill="#5f4a34"/><rect x="14" y="1" width="1" height="10" fill="#5f4a34"/><rect x="2" y="3" width="5" height="1" fill="#0a0a96"/><rect x="8" y="3" width="2" height="1" fill="#0a0a96"/><rect x="11" y="3" width="2" height="1" fill="#0a0a96"/><rect x="2" y="5" width="3" height="1" fill="#0a0a96"/><rect x="6" y="5" width="4" height="1" fill="#0a0a96"/><rect x="2" y="7" width="4" height="1" fill="#0a0a96"/><rect x="7" y="7" width="5" height="1" fill="#0a0a96"/></svg>
<div class="row" style="left:84px;top:862px">TaxAmt</div>
<svg style="left:63px;top:883px" width="15" height="11" viewBox="0 0 15 11" shape-rendering="crispEdges"><rect x="1" y="1" width="13" height="4" fill="#fffffb"/><rect x="1" y="5" width="13" height="5" fill="#fffde6"/><rect x="0" y="0" width="15" height="1" fill="#b89c62"/><rect x="0" y="0" width="1" height="11" fill="#b89c62"/><rect x="0" y="10" width="15" height="1" fill="#5f4a34"/><rect x="14" y="1" width="1" height="10" fill="#5f4a34"/><rect x="2" y="3" width="5" height="1" fill="#0a0a96"/><rect x="8" y="3" width="2" height="1" fill="#0a0a96"/><rect x="11" y="3" width="2" height="1" fill="#0a0a96"/><rect x="2" y="5" width="3" height="1" fill="#0a0a96"/><rect x="6" y="5" width="4" height="1" fill="#0a0a96"/><rect x="2" y="7" width="4" height="1" fill="#0a0a96"/><rect x="7" y="7" width="5" height="1" fill="#0a0a96"/></svg>
<div class="row" style="left:84px;top:880px">RptLiteralsLAllocDepHdr</div>
<svg style="left:63px;top:901px" width="15" height="11" viewBox="0 0 15 11" shape-rendering="crispEdges"><rect x="1" y="1" width="13" height="4" fill="#fffffb"/><rect x="1" y="5" width="13" height="5" fill="#fffde6"/><rect x="0" y="0" width="15" height="1" fill="#b89c62"/><rect x="0" y="0" width="1" height="11" fill="#b89c62"/><rect x="0" y="10" width="15" height="1" fill="#5f4a34"/><rect x="14" y="1" width="1" height="10" fill="#5f4a34"/><rect x="2" y="3" width="5" height="1" fill="#0a0a96"/><rect x="8" y="3" width="2" height="1" fill="#0a0a96"/><rect x="11" y="3" width="2" height="1" fill="#0a0a96"/><rect x="2" y="5" width="3" height="1" fill="#0a0a96"/><rect x="6" y="5" width="4" height="1" fill="#0a0a96"/><rect x="2" y="7" width="4" height="1" fill="#0a0a96"/><rect x="7" y="7" width="5" height="1" fill="#0a0a96"/></svg>
<div class="row" style="left:84px;top:898px">RptLiteralsLAllocDepInvoiceNum</div>
<svg style="left:63px;top:919px" width="15" height="11" viewBox="0 0 15 11" shape-rendering="crispEdges"><rect x="1" y="1" width="13" height="4" fill="#fffffb"/><rect x="1" y="5" width="13" height="5" fill="#fffde6"/><rect x="0" y="0" width="15" height="1" fill="#b89c62"/><rect x="0" y="0" width="1" height="11" fill="#b89c62"/><rect x="0" y="10" width="15" height="1" fill="#5f4a34"/><rect x="14" y="1" width="1" height="10" fill="#5f4a34"/><rect x="2" y="3" width="5" height="1" fill="#0a0a96"/><rect x="8" y="3" width="2" height="1" fill="#0a0a96"/><rect x="11" y="3" width="2" height="1" fill="#0a0a96"/><rect x="2" y="5" width="3" height="1" fill="#0a0a96"/><rect x="6" y="5" width="4" height="1" fill="#0a0a96"/><rect x="2" y="7" width="4" height="1" fill="#0a0a96"/><rect x="7" y="7" width="5" height="1" fill="#0a0a96"/></svg>
<div class="row" style="left:84px;top:916px">RptLiteralsLAllocDepAllocBal</div>
<svg style="left:63px;top:937px" width="15" height="11" viewBox="0 0 15 11" shape-rendering="crispEdges"><rect x="1" y="1" width="13" height="4" fill="#fffffb"/><rect x="1" y="5" width="13" height="5" fill="#fffde6"/><rect x="0" y="0" width="15" height="1" fill="#b89c62"/><rect x="0" y="0" width="1" height="11" fill="#b89c62"/><rect x="0" y="10" width="15" height="1" fill="#5f4a34"/><rect x="14" y="1" width="1" height="10" fill="#5f4a34"/><rect x="2" y="3" width="5" height="1" fill="#0a0a96"/><rect x="8" y="3" width="2" height="1" fill="#0a0a96"/><rect x="11" y="3" width="2" height="1" fill="#0a0a96"/><rect x="2" y="5" width="3" height="1" fill="#0a0a96"/><rect x="6" y="5" width="4" height="1" fill="#0a0a96"/><rect x="2" y="7" width="4" height="1" fill="#0a0a96"/><rect x="7" y="7" width="5" height="1" fill="#0a0a96"/></svg>
<div class="row" style="left:84px;top:934px">RptLiteralsLAllocDepInvoiceDate</div>
<svg style="left:63px;top:955px" width="15" height="11" viewBox="0 0 15 11" shape-rendering="crispEdges"><rect x="1" y="1" width="13" height="4" fill="#fffffb"/><rect x="1" y="5" width="13" height="5" fill="#fffde6"/><rect x="0" y="0" width="15" height="1" fill="#b89c62"/><rect x="0" y="0" width="1" height="11" fill="#b89c62"/><rect x="0" y="10" width="15" height="1" fill="#5f4a34"/><rect x="14" y="1" width="1" height="10" fill="#5f4a34"/><rect x="2" y="3" width="5" height="1" fill="#0a0a96"/><rect x="8" y="3" width="2" height="1" fill="#0a0a96"/><rect x="11" y="3" width="2" height="1" fill="#0a0a96"/><rect x="2" y="5" width="3" height="1" fill="#0a0a96"/><rect x="6" y="5" width="4" height="1" fill="#0a0a96"/><rect x="2" y="7" width="4" height="1" fill="#0a0a96"/><rect x="7" y="7" width="5" height="1" fill="#0a0a96"/></svg>
<div class="row" style="left:84px;top:952px">RptLiteralsLAllocDepAllocAmt</div>
<svg style="left:63px;top:973px" width="15" height="11" viewBox="0 0 15 11" shape-rendering="crispEdges"><rect x="1" y="1" width="13" height="4" fill="#fffffb"/><rect x="1" y="5" width="13" height="5" fill="#fffde6"/><rect x="0" y="0" width="15" height="1" fill="#b89c62"/><rect x="0" y="0" width="1" height="11" fill="#b89c62"/><rect x="0" y="10" width="15" height="1" fill="#5f4a34"/><rect x="14" y="1" width="1" height="10" fill="#5f4a34"/><rect x="2" y="3" width="5" height="1" fill="#0a0a96"/><rect x="8" y="3" width="2" height="1" fill="#0a0a96"/><rect x="11" y="3" width="2" height="1" fill="#0a0a96"/><rect x="2" y="5" width="3" height="1" fill="#0a0a96"/><rect x="6" y="5" width="4" height="1" fill="#0a0a96"/><rect x="2" y="7" width="4" height="1" fill="#0a0a96"/><rect x="7" y="7" width="5" height="1" fill="#0a0a96"/></svg>
<div class="row" style="left:84px;top:970px">RptLiteralsLAllocDepTaxAmt</div>
<svg style="left:29px;top:994px" width="9" height="9" viewBox="0 0 9 9"><rect x="0.5" y="0.5" width="8" height="8" rx="1" fill="#fafafa" stroke="#8e8e8e"/><rect x="1" y="5.5" width="7" height="2.5" fill="#e4e4e4"/><path d="M2 4.5 H7" stroke="#3447a0" stroke-width="1"/></svg>
<svg style="left:44px;top:990px" width="15" height="14" viewBox="0 0 15 14"><rect x="0.5" y="0.5" width="14" height="13" fill="#fff" stroke="#6e6e6e"/><rect x="0" y="0" width="15" height="2.5" fill="#6e6e6e"/><path d="M2.5 5.5 H12.5 M2.5 8.5 H12.5 M2.5 11.5 H12.5" stroke="#c4c4c4" stroke-dasharray="2.4 1.3"/></svg>
<div class="row" style="left:65px;top:988px">RptParameter</div>
<svg style="left:63px;top:1009px" width="15" height="11" viewBox="0 0 15 11" shape-rendering="crispEdges"><rect x="1" y="1" width="13" height="4" fill="#fffffb"/><rect x="1" y="5" width="13" height="5" fill="#fffde6"/><rect x="0" y="0" width="15" height="1" fill="#b89c62"/><rect x="0" y="0" width="1" height="11" fill="#b89c62"/><rect x="0" y="10" width="15" height="1" fill="#5f4a34"/><rect x="14" y="1" width="1" height="10" fill="#5f4a34"/><rect x="2" y="3" width="5" height="1" fill="#0a0a96"/><rect x="8" y="3" width="2" height="1" fill="#0a0a96"/><rect x="11" y="3" width="2" height="1" fill="#0a0a96"/><rect x="2" y="5" width="3" height="1" fill="#0a0a96"/><rect x="6" y="5" width="4" height="1" fill="#0a0a96"/><rect x="2" y="7" width="4" height="1" fill="#0a0a96"/><rect x="7" y="7" width="5" height="1" fill="#0a0a96"/></svg>
<div class="row" style="left:84px;top:1006px">DecimalsGeneral</div>
<svg style="left:63px;top:1027px" width="15" height="11" viewBox="0 0 15 11" shape-rendering="crispEdges"><rect x="1" y="1" width="13" height="4" fill="#fffffb"/><rect x="1" y="5" width="13" height="5" fill="#fffde6"/><rect x="0" y="0" width="15" height="1" fill="#b89c62"/><rect x="0" y="0" width="1" height="11" fill="#b89c62"/><rect x="0" y="10" width="15" height="1" fill="#5f4a34"/><rect x="14" y="1" width="1" height="10" fill="#5f4a34"/><rect x="2" y="3" width="5" height="1" fill="#0a0a96"/><rect x="8" y="3" width="2" height="1" fill="#0a0a96"/><rect x="11" y="3" width="2" height="1" fill="#0a0a96"/><rect x="2" y="5" width="3" height="1" fill="#0a0a96"/><rect x="6" y="5" width="4" height="1" fill="#0a0a96"/><rect x="2" y="7" width="4" height="1" fill="#0a0a96"/><rect x="7" y="7" width="5" height="1" fill="#0a0a96"/></svg>
<div class="row" style="left:84px;top:1024px">DecimalsQuantity</div>
</div>
<div id="dlg" class="abs" style="left:972px;top:378px;width:650px;height:671px">
<div class="abs" style="left:0;top:0;width:648px;height:30px;background:#fff"></div>
<div class="t" style="left:8px;top:8px;letter-spacing:0">Dataset Properties</div>
<svg style="left:628px;top:9px" width="10" height="10" viewBox="0 0 10 10"><path d="M0.3 0.3 L9.7 9.7 M9.7 0.3 L0.3 9.7" stroke="#000" stroke-width="1" fill="none"/></svg>
<div class="abs" style="left:6px;top:36px;width:126px;height:597px;background:#fff;border:1px solid #828790;box-shadow:0 0 0 0.5px #dfe1e5"></div>
<div class="abs" style="left:8px;top:64px;width:122px;height:24px;background:#e8e8e8;border:1px dotted #000"></div>
<div class="t" style="left:19.5px;top:44px;font-size:11px;letter-spacing:0.12px;color:#2a2a2a">Query</div>
<div class="t" style="left:19.5px;top:70px;font-size:11px;letter-spacing:0.12px;color:#2a2a2a">Fields</div>
<div class="t" style="left:19.5px;top:96px;font-size:11px;letter-spacing:0.12px;color:#2a2a2a">Options</div>
<div class="t" style="left:19.5px;top:122px;font-size:11px;letter-spacing:0.12px;color:#2a2a2a">Filters</div>
<div class="t" style="left:19.5px;top:148px;font-size:11px;letter-spacing:0.12px;color:#2a2a2a">Parameters</div>
<div class="abs" style="left:138px;top:36px;width:504px;height:597px;background:#fff;border:1px solid #9a9a9a"></div>
<div class="abs" style="left:139px;top:37px;width:502px;height:57px;background:#f0f0f0"></div>
<div class="t" style="left:148px;top:52.5px;font-size:15px;line-height:18px;letter-spacing:0;color:#111">Change query and calculated fields.</div>
<div class="btn" style="left:154px;top:97px;width:36px">Add</div>
<div class="btn" style="left:196px;top:97px;width:48px;background:#ccc;border-color:#bfbfbf;color:#6d6d6d">Delete</div>
<div class="btn" style="left:250px;top:97px;width:26px;background:#ccc;border-color:#bfbfbf"></div>
<div class="btn" style="left:282px;top:97px;width:26px;background:#ccc;border-color:#bfbfbf"></div>
<svg style="left:259px;top:104px" width="9" height="9" viewBox="0 0 9 9"><path d="M4.5 0.5 L8.5 4.5 H6.3 V8.5 H2.7 V4.5 H0.5 Z" fill="#b5b5b5" stroke="#8f8f8f" stroke-width="0.8"/></svg>
<svg style="left:291px;top:103px" width="9" height="9" viewBox="0 0 9 9"><path d="M4.5 8.5 L8.5 4.5 H6.3 V0.5 H2.7 V4.5 H0.5 Z" fill="#b5b5b5" stroke="#8f8f8f" stroke-width="0.8"/></svg>
<div class="abs" style="left:153px;top:127px;width:474px;height:499px;background:#fff;border:1px solid #828282;overflow:hidden">
<div class="t" style="left:2.5px;top:4px;letter-spacing:-0.28px">Field Name</div>
<div class="t" style="left:229px;top:4px;letter-spacing:-0.28px">Field Source</div>
<div class="abs" style="left:226px;top:0;width:1px;height:23px;background:#e3e3e3"></div>
<div class="inp" style="left:6px;top:27px;width:218px">AllocAmt</div><div class="inp" style="left:230px;top:27px;width:215px">AllocAmt</div>
<div class="inp" style="left:6px;top:57px;width:218px">AllocBal</div><div class="inp" style="left:230px;top:57px;width:215px">AllocBal</div>
<div class="inp" style="left:6px;top:87px;width:218px">AllocTaxBal</div><div class="inp" style="left:230px;top:87px;width:215px">AllocTaxBal</div>
<div class="inp" style="left:6px;top:117px;width:218px">Company</div><div class="inp" style="left:230px;top:117px;width:215px">Company</div>
<div class="inp" style="left:6px;top:147px;width:218px">CurrencyCode</div><div class="inp" style="left:230px;top:147px;width:215px">CurrencyCode</div>
<div class="inp" style="left:6px;top:177px;width:218px">CurrencySwitch</div><div class="inp" style="left:230px;top:177px;width:215px">CurrencySwitch</div>
<div class="inp" style="left:6px;top:207px;width:218px">CustNum</div><div class="inp" style="left:230px;top:207px;width:215px">CustNum</div>
<div class="inp" style="left:6px;top:237px;width:218px">DepApplyDate</div><div class="inp" style="left:230px;top:237px;width:215px">DepApplyDate</div>
<div class="inp" style="left:6px;top:267px;width:218px">DepCheckRef</div><div class="inp" style="left:230px;top:267px;width:215px">DepCheckRef</div>
<div class="inp" style="left:6px;top:297px;width:218px">DepGroupID</div><div class="inp" style="left:230px;top:297px;width:215px">DepGroupID</div>
<div class="inp" style="left:6px;top:327px;width:218px">DepHeadNum</div><div class="inp" style="left:230px;top:327px;width:215px">DepHeadNum</div>
<div class="inp" style="left:6px;top:357px;width:218px">DepInvoiceNum</div><div class="inp" style="left:230px;top:357px;width:215px">DepInvoiceNum</div>
<div class="inp" style="left:6px;top:387px;width:218px">DocAllocAmt</div><div class="inp" style="left:230px;top:387px;width:215px">DocAllocAmt</div>
<div class="inp" style="left:6px;top:417px;width:218px">DocAllocBal</div><div class="inp" style="left:230px;top:417px;width:215px">DocAllocBal</div>
<div class="inp" style="left:6px;top:447px;width:218px">DocAllocTaxBal</div><div class="inp" style="left:230px;top:447px;width:215px">DocAllocTaxBal</div>
<div class="inp" style="left:6px;top:477px;width:218px">DocDocumentAmt</div><div class="inp" style="left:230px;top:477px;width:215px">DocDocumentAmt</div>
<div class="abs" style="left:456px;top:23px;width:16px;height:474px;background:#f0f0f0"></div>
<div class="abs" style="left:456px;top:40px;width:16px;height:151px;background:#cdcdcd"></div>
<svg style="left:460px;top:29px" width="8" height="5" viewBox="0 0 8 5"><path d="M0.6 4.4 L4 1 L7.4 4.4" fill="none" stroke="#505050" stroke-width="1.9"/></svg>
<svg style="left:460px;top:486px" width="8" height="5" viewBox="0 0 8 5"><path d="M0.6 0.6 L4 4 L7.4 0.6" fill="none" stroke="#505050" stroke-width="1.9"/></svg>
</div>
<div class="btn" style="left:7px;top:640px;width:74px">Help</div>
<div class="btn" style="left:485px;top:640px;width:74px;border:2px solid #0078d7;line-height:18px">OK</div>
<div class="btn" style="left:567px;top:640px;width:74px">Cancel</div>
<svg style="left:637px;top:659px" width="10" height="10" viewBox="0 0 10 10" fill="#bdbdbd"><rect x="7" y="1" width="2" height="2"/><rect x="4" y="4" width="2" height="2"/><rect x="7" y="4" width="2" height="2"/><rect x="1" y="7" width="2" height="2"/><rect x="4" y="7" width="2" height="2"/><rect x="7" y="7" width="2" height="2"/></svg>
</div>
</body></html>
